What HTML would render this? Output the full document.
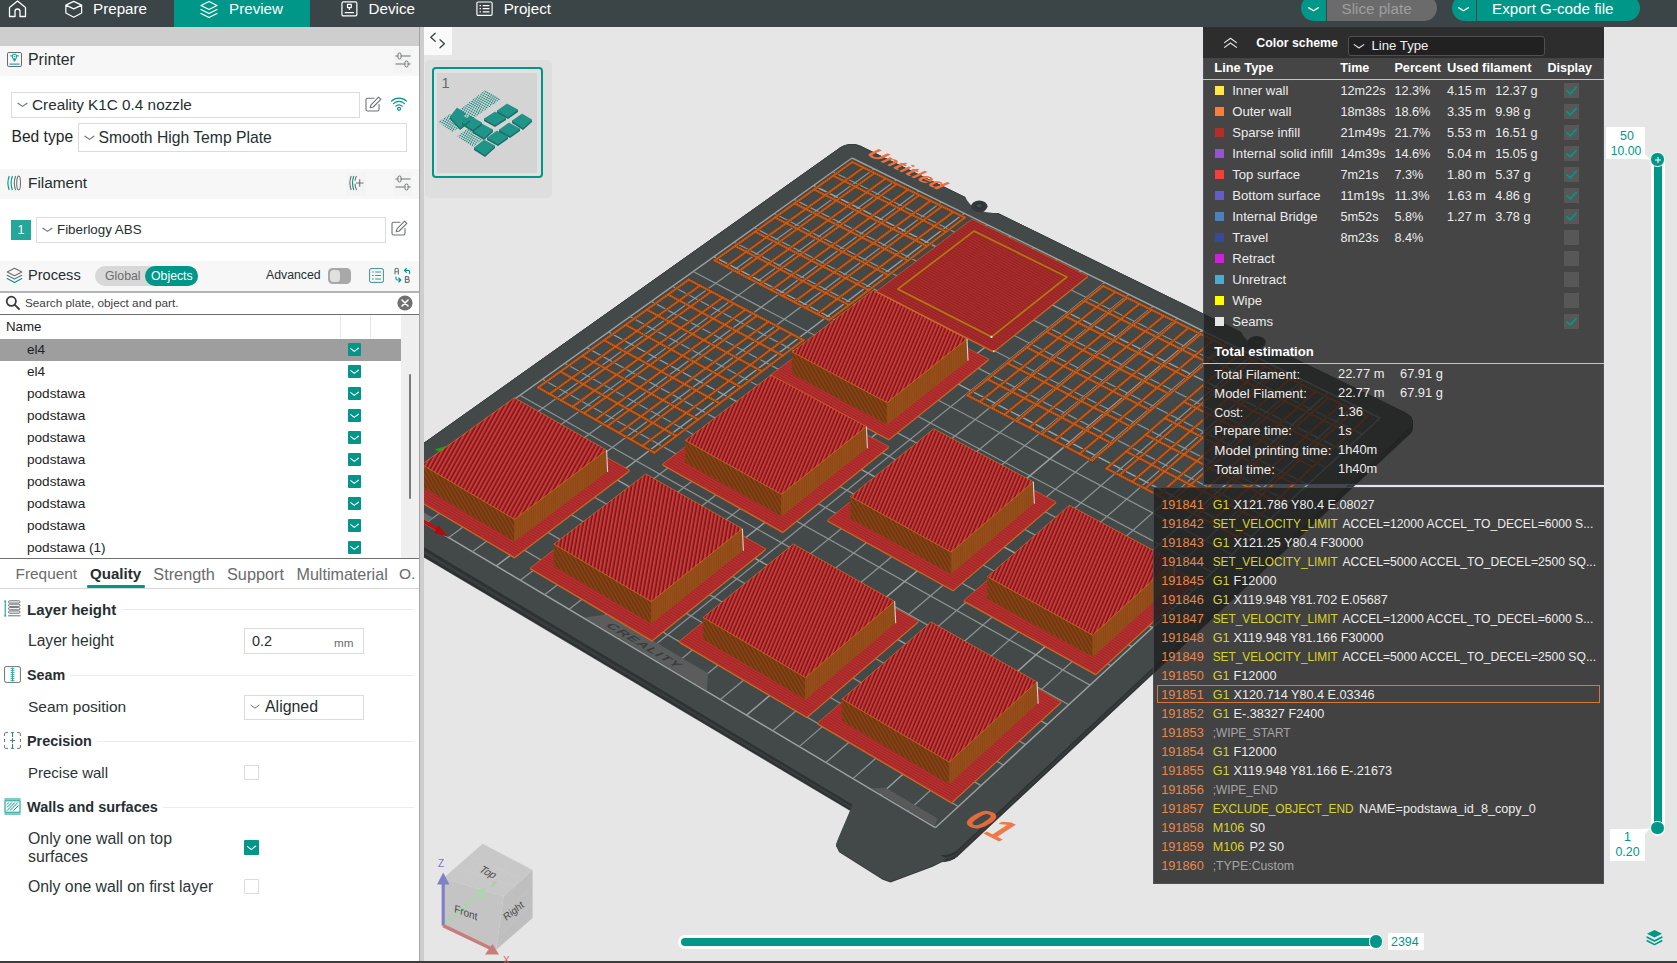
<!DOCTYPE html>
<html lang="en"><head><meta charset="utf-8"><title>OrcaSlicer Preview</title>
<style>
*{box-sizing:border-box}
html,body{margin:0;padding:0}
body{width:1677px;height:963px;overflow:hidden;position:relative;background:#e6e6e6;font-family:"Liberation Sans",sans-serif;color:#262e30}
.abs{position:absolute}
.t{position:absolute;white-space:nowrap;line-height:1}
#topbar{position:absolute;left:0;top:0;width:1677px;height:27px;background:#3b4446}
#topbar .t{color:#fff;font-size:15.2px}
#left{position:absolute;left:0;top:27px;width:419px;height:935px;background:#fff}
.hdr{position:absolute;left:0;width:419px;background:#f7f7f7}
.box{position:absolute;border:1px solid #dbdbdb;background:#fff}
.cb{position:absolute;width:13px;height:13px;background:#009688;border-radius:1px}
.cb svg{position:absolute;left:0;top:0}
.row{position:absolute;left:0;width:401px;height:22px}
.row .t{left:27px;top:4px;font-size:13.6px;color:#1d2224}
.ucb{position:absolute;width:15px;height:15px;border:1px solid #dbdbdb;background:#fff;border-radius:1px}
.sec{position:absolute;left:27px;font-weight:bold;font-size:14.6px;color:#262e30;white-space:nowrap;line-height:1}
.secline{position:absolute;height:1px;background:#ececec;right:5px}
.lab{position:absolute;left:28px;font-size:14.7px;color:#2c3436;line-height:1;white-space:nowrap}
</style></head><body>

<svg width="1253" height="936" viewBox="0 0 1253 936" style="position:absolute;left:424px;top:27px">
<defs>
<pattern id="pt" width="3.50" height="8" patternUnits="userSpaceOnUse" patternTransform="rotate(23)"><rect width="3.50" height="8" fill="#d13939"/><rect x="1.93" width="1.57" height="8" fill="#731919"/><rect x="1.63" width=".3" height="8" fill="#a52929"/></pattern>
<pattern id="pt3" width="3.75" height="8" patternUnits="userSpaceOnUse" patternTransform="rotate(10)"><rect width="3.75" height="8" fill="#d13939"/><rect x="2.06" width="1.69" height="8" fill="#731919"/><rect x="1.76" width=".3" height="8" fill="#a52929"/></pattern>
<pattern id="pt2" width="3.80" height="8" patternUnits="userSpaceOnUse" patternTransform="rotate(29)"><rect width="3.80" height="8" fill="#d13939"/><rect x="2.09" width="1.71" height="8" fill="#731919"/><rect x="1.79" width=".3" height="8" fill="#a52929"/></pattern>
<pattern id="pb" width="2.4" height="2.4" patternUnits="userSpaceOnUse" patternTransform="rotate(30)"><rect width="2.4" height="2.4" fill="#bb3030"/><rect y="1.5" width="2.4" height="0.9" fill="#9a2626"/><rect x="1.6" width="0.8" height="2.4" fill="#a82a2a" opacity=".55"/></pattern>
<pattern id="pbf" width="2.4" height="2.4" patternUnits="userSpaceOnUse" patternTransform="rotate(30)"><rect width="2.4" height="2.4" fill="#b22d2d"/><rect y="1.4" width="2.4" height="1" fill="#8c2222"/><rect x="1.5" width="0.9" height="2.4" fill="#9a2626" opacity=".6"/></pattern>
<pattern id="pl" width="3.4" height="8" patternUnits="userSpaceOnUse" patternTransform="rotate(-30)"><rect width="3.4" height="8" fill="#854315"/><rect x="2.1" width="1.3" height="8" fill="#6b340f"/></pattern>
<pattern id="pr" width="2.2" height="8" patternUnits="userSpaceOnUse"><rect width="2.2" height="8" fill="#964e19"/><rect x="1.5" width="0.7" height="8" fill="#8c4817"/></pattern>
</defs>
<polygon points="985.7,400.6 987.6,398.3 987.6,404.8 985.7,407.1" fill="#2b2f30" stroke="#2b2f30" stroke-width="0.6" stroke-linejoin="round" />
<polygon points="987.6,398.3 988.4,395.7 988.4,402.2 987.6,404.8" fill="#2b2f30" stroke="#2b2f30" stroke-width="0.6" stroke-linejoin="round" />
<polygon points="988.4,395.7 988.1,393.0 988.1,399.6 988.4,402.2" fill="#2b2f30" stroke="#2b2f30" stroke-width="0.6" stroke-linejoin="round" />
<polygon points="988.1,393.0 986.8,390.3 986.8,397.1 988.1,399.6" fill="#2b2f30" stroke="#2b2f30" stroke-width="0.6" stroke-linejoin="round" />
<polygon points="986.8,390.3 984.5,388.0 984.5,394.8 986.8,397.1" fill="#2b2f30" stroke="#2b2f30" stroke-width="0.6" stroke-linejoin="round" />
<polygon points="984.5,388.0 981.4,386.0 981.4,393.0 984.5,394.8" fill="#2b2f30" stroke="#2b2f30" stroke-width="0.6" stroke-linejoin="round" />
<polygon points="981.4,386.0 436.9,119.4 436.9,129.9 981.4,393.0" fill="#2b2f30" stroke="#2b2f30" stroke-width="0.6" stroke-linejoin="round" />
<polygon points="436.9,119.4 433.7,118.2 433.7,128.7 436.9,129.9" fill="#2b2f30" stroke="#2b2f30" stroke-width="0.6" stroke-linejoin="round" />
<polygon points="433.7,118.2 430.1,117.6 430.1,128.1 433.7,128.7" fill="#2b2f30" stroke="#2b2f30" stroke-width="0.6" stroke-linejoin="round" />
<polygon points="430.1,117.6 426.3,117.5 426.3,128.0 430.1,128.1" fill="#2b2f30" stroke="#2b2f30" stroke-width="0.6" stroke-linejoin="round" />
<polygon points="426.3,117.5 422.6,118.1 422.6,128.6 426.3,128.0" fill="#2b2f30" stroke="#2b2f30" stroke-width="0.6" stroke-linejoin="round" />
<polygon points="422.6,118.1 419.2,119.2 419.2,129.7 422.6,128.6" fill="#2b2f30" stroke="#2b2f30" stroke-width="0.6" stroke-linejoin="round" />
<polygon points="419.2,119.2 416.4,120.7 416.4,131.2 419.2,129.7" fill="#2b2f30" stroke="#2b2f30" stroke-width="0.6" stroke-linejoin="round" />
<polygon points="416.4,120.7 -67.1,463.8 -67.1,474.3 416.4,131.2" fill="#2b2f30" stroke="#2b2f30" stroke-width="0.6" stroke-linejoin="round" />
<polygon points="-67.1,463.8 -69.9,466.2 -69.9,476.7 -67.1,474.3" fill="#2b2f30" stroke="#2b2f30" stroke-width="0.6" stroke-linejoin="round" />
<polygon points="-69.9,466.2 -71.7,469.0 -71.7,479.5 -69.9,476.7" fill="#2b2f30" stroke="#2b2f30" stroke-width="0.6" stroke-linejoin="round" />
<polygon points="-71.7,469.0 -72.4,471.9 -72.4,482.4 -71.7,479.5" fill="#2b2f30" stroke="#2b2f30" stroke-width="0.6" stroke-linejoin="round" />
<polygon points="-72.4,471.9 -72.0,474.7 -72.0,485.2 -72.4,482.4" fill="#2b2f30" stroke="#2b2f30" stroke-width="0.6" stroke-linejoin="round" />
<polygon points="-72.0,474.7 -70.5,477.3 -70.5,487.8 -72.0,485.2" fill="#2b2f30" stroke="#2b2f30" stroke-width="0.6" stroke-linejoin="round" />
<polygon points="-70.5,477.3 -67.9,479.3 -67.9,489.8 -70.5,487.8" fill="#2b2f30" stroke="#2b2f30" stroke-width="0.6" stroke-linejoin="round" />
<polygon points="-67.9,479.3 507.9,825.2 507.9,832.1 -67.9,489.8" fill="#2b2f30" stroke="#2b2f30" stroke-width="0.6" stroke-linejoin="round" />
<polygon points="507.9,825.2 511.9,827.0 511.9,833.8 507.9,832.1" fill="#2b2f30" stroke="#2b2f30" stroke-width="0.6" stroke-linejoin="round" />
<polygon points="511.9,827.0 516.4,827.9 516.4,834.6 511.9,833.8" fill="#2b2f30" stroke="#2b2f30" stroke-width="0.6" stroke-linejoin="round" />
<polygon points="516.4,827.9 521.2,827.9 521.2,834.6 516.4,834.6" fill="#2b2f30" stroke="#2b2f30" stroke-width="0.6" stroke-linejoin="round" />
<polygon points="521.2,827.9 525.8,827.0 525.8,833.6 521.2,834.6" fill="#2b2f30" stroke="#2b2f30" stroke-width="0.6" stroke-linejoin="round" />
<polygon points="525.8,827.0 530.0,825.3 530.0,831.8 525.8,833.6" fill="#2b2f30" stroke="#2b2f30" stroke-width="0.6" stroke-linejoin="round" />
<polygon points="530.0,825.3 533.5,822.8 533.5,829.3 530.0,831.8" fill="#2b2f30" stroke="#2b2f30" stroke-width="0.6" stroke-linejoin="round" />
<polygon points="533.5,822.8 985.7,400.6 985.7,407.1 533.5,829.3" fill="#2b2f30" stroke="#2b2f30" stroke-width="0.6" stroke-linejoin="round" />
<polygon points="985.7,400.6 987.6,398.3 987.6,402.7 985.7,405.1" fill="#393d3e" stroke="#393d3e" stroke-width="0.6" stroke-linejoin="round" />
<polygon points="987.6,398.3 988.4,395.7 988.4,400.1 987.6,402.7" fill="#393d3e" stroke="#393d3e" stroke-width="0.6" stroke-linejoin="round" />
<polygon points="988.4,395.7 988.1,393.0 988.1,397.5 988.4,400.1" fill="#393d3e" stroke="#393d3e" stroke-width="0.6" stroke-linejoin="round" />
<polygon points="988.1,393.0 986.8,390.3 986.8,394.9 988.1,397.5" fill="#393d3e" stroke="#393d3e" stroke-width="0.6" stroke-linejoin="round" />
<polygon points="986.8,390.3 984.5,388.0 984.5,392.6 986.8,394.9" fill="#393d3e" stroke="#393d3e" stroke-width="0.6" stroke-linejoin="round" />
<polygon points="984.5,388.0 981.4,386.0 981.4,390.8 984.5,392.6" fill="#393d3e" stroke="#393d3e" stroke-width="0.6" stroke-linejoin="round" />
<polygon points="981.4,386.0 436.9,119.4 436.9,126.5 981.4,390.8" fill="#393d3e" stroke="#393d3e" stroke-width="0.6" stroke-linejoin="round" />
<polygon points="436.9,119.4 433.7,118.2 433.7,125.3 436.9,126.5" fill="#393d3e" stroke="#393d3e" stroke-width="0.6" stroke-linejoin="round" />
<polygon points="433.7,118.2 430.1,117.6 430.1,124.7 433.7,125.3" fill="#393d3e" stroke="#393d3e" stroke-width="0.6" stroke-linejoin="round" />
<polygon points="430.1,117.6 426.3,117.5 426.3,124.7 430.1,124.7" fill="#393d3e" stroke="#393d3e" stroke-width="0.6" stroke-linejoin="round" />
<polygon points="426.3,117.5 422.6,118.1 422.6,125.2 426.3,124.7" fill="#393d3e" stroke="#393d3e" stroke-width="0.6" stroke-linejoin="round" />
<polygon points="422.6,118.1 419.2,119.2 419.2,126.3 422.6,125.2" fill="#393d3e" stroke="#393d3e" stroke-width="0.6" stroke-linejoin="round" />
<polygon points="419.2,119.2 416.4,120.7 416.4,127.9 419.2,126.3" fill="#393d3e" stroke="#393d3e" stroke-width="0.6" stroke-linejoin="round" />
<polygon points="416.4,120.7 -67.1,463.8 -67.1,470.9 416.4,127.9" fill="#393d3e" stroke="#393d3e" stroke-width="0.6" stroke-linejoin="round" />
<polygon points="-67.1,463.8 -69.9,466.2 -69.9,473.4 -67.1,470.9" fill="#393d3e" stroke="#393d3e" stroke-width="0.6" stroke-linejoin="round" />
<polygon points="-69.9,466.2 -71.7,469.0 -71.7,476.2 -69.9,473.4" fill="#393d3e" stroke="#393d3e" stroke-width="0.6" stroke-linejoin="round" />
<polygon points="-71.7,469.0 -72.4,471.9 -72.4,479.1 -71.7,476.2" fill="#393d3e" stroke="#393d3e" stroke-width="0.6" stroke-linejoin="round" />
<polygon points="-72.4,471.9 -72.0,474.7 -72.0,481.9 -72.4,479.1" fill="#393d3e" stroke="#393d3e" stroke-width="0.6" stroke-linejoin="round" />
<polygon points="-72.0,474.7 -70.5,477.3 -70.5,484.4 -72.0,481.9" fill="#393d3e" stroke="#393d3e" stroke-width="0.6" stroke-linejoin="round" />
<polygon points="-70.5,477.3 -67.9,479.3 -67.9,486.5 -70.5,484.4" fill="#393d3e" stroke="#393d3e" stroke-width="0.6" stroke-linejoin="round" />
<polygon points="-67.9,479.3 507.9,825.2 507.9,829.9 -67.9,486.5" fill="#393d3e" stroke="#393d3e" stroke-width="0.6" stroke-linejoin="round" />
<polygon points="507.9,825.2 511.9,827.0 511.9,831.6 507.9,829.9" fill="#393d3e" stroke="#393d3e" stroke-width="0.6" stroke-linejoin="round" />
<polygon points="511.9,827.0 516.4,827.9 516.4,832.5 511.9,831.6" fill="#393d3e" stroke="#393d3e" stroke-width="0.6" stroke-linejoin="round" />
<polygon points="516.4,827.9 521.2,827.9 521.2,832.5 516.4,832.5" fill="#393d3e" stroke="#393d3e" stroke-width="0.6" stroke-linejoin="round" />
<polygon points="521.2,827.9 525.8,827.0 525.8,831.5 521.2,832.5" fill="#393d3e" stroke="#393d3e" stroke-width="0.6" stroke-linejoin="round" />
<polygon points="525.8,827.0 530.0,825.3 530.0,829.7 525.8,831.5" fill="#393d3e" stroke="#393d3e" stroke-width="0.6" stroke-linejoin="round" />
<polygon points="530.0,825.3 533.5,822.8 533.5,827.2 530.0,829.7" fill="#393d3e" stroke="#393d3e" stroke-width="0.6" stroke-linejoin="round" />
<polygon points="533.5,822.8 985.7,400.6 985.7,405.1 533.5,827.2" fill="#393d3e" stroke="#393d3e" stroke-width="0.6" stroke-linejoin="round" />
<polygon points="985.7,400.6 987.6,398.3 987.6,400.3 985.7,402.6" fill="#2e3233" stroke="#2e3233" stroke-width="0.6" stroke-linejoin="round" />
<polygon points="987.6,398.3 988.4,395.7 988.4,397.7 987.6,400.3" fill="#2e3233" stroke="#2e3233" stroke-width="0.6" stroke-linejoin="round" />
<polygon points="988.4,395.7 988.1,393.0 988.1,395.0 988.4,397.7" fill="#2e3233" stroke="#2e3233" stroke-width="0.6" stroke-linejoin="round" />
<polygon points="988.1,393.0 986.8,390.3 986.8,392.4 988.1,395.0" fill="#2e3233" stroke="#2e3233" stroke-width="0.6" stroke-linejoin="round" />
<polygon points="986.8,390.3 984.5,388.0 984.5,390.0 986.8,392.4" fill="#2e3233" stroke="#2e3233" stroke-width="0.6" stroke-linejoin="round" />
<polygon points="984.5,388.0 981.4,386.0 981.4,388.1 984.5,390.0" fill="#2e3233" stroke="#2e3233" stroke-width="0.6" stroke-linejoin="round" />
<polygon points="981.4,386.0 436.9,119.4 436.9,122.5 981.4,388.1" fill="#2e3233" stroke="#2e3233" stroke-width="0.6" stroke-linejoin="round" />
<polygon points="436.9,119.4 433.7,118.2 433.7,121.4 436.9,122.5" fill="#2e3233" stroke="#2e3233" stroke-width="0.6" stroke-linejoin="round" />
<polygon points="433.7,118.2 430.1,117.6 430.1,120.7 433.7,121.4" fill="#2e3233" stroke="#2e3233" stroke-width="0.6" stroke-linejoin="round" />
<polygon points="430.1,117.6 426.3,117.5 426.3,120.7 430.1,120.7" fill="#2e3233" stroke="#2e3233" stroke-width="0.6" stroke-linejoin="round" />
<polygon points="426.3,117.5 422.6,118.1 422.6,121.2 426.3,120.7" fill="#2e3233" stroke="#2e3233" stroke-width="0.6" stroke-linejoin="round" />
<polygon points="422.6,118.1 419.2,119.2 419.2,122.3 422.6,121.2" fill="#2e3233" stroke="#2e3233" stroke-width="0.6" stroke-linejoin="round" />
<polygon points="419.2,119.2 416.4,120.7 416.4,123.9 419.2,122.3" fill="#2e3233" stroke="#2e3233" stroke-width="0.6" stroke-linejoin="round" />
<polygon points="416.4,120.7 -67.1,463.8 -67.1,466.9 416.4,123.9" fill="#2e3233" stroke="#2e3233" stroke-width="0.6" stroke-linejoin="round" />
<polygon points="-67.1,463.8 -69.9,466.2 -69.9,469.4 -67.1,466.9" fill="#2e3233" stroke="#2e3233" stroke-width="0.6" stroke-linejoin="round" />
<polygon points="-69.9,466.2 -71.7,469.0 -71.7,472.2 -69.9,469.4" fill="#2e3233" stroke="#2e3233" stroke-width="0.6" stroke-linejoin="round" />
<polygon points="-71.7,469.0 -72.4,471.9 -72.4,475.1 -71.7,472.2" fill="#2e3233" stroke="#2e3233" stroke-width="0.6" stroke-linejoin="round" />
<polygon points="-72.4,471.9 -72.0,474.7 -72.0,477.9 -72.4,475.1" fill="#2e3233" stroke="#2e3233" stroke-width="0.6" stroke-linejoin="round" />
<polygon points="-72.0,474.7 -70.5,477.3 -70.5,480.4 -72.0,477.9" fill="#2e3233" stroke="#2e3233" stroke-width="0.6" stroke-linejoin="round" />
<polygon points="-70.5,477.3 -67.9,479.3 -67.9,482.5 -70.5,480.4" fill="#2e3233" stroke="#2e3233" stroke-width="0.6" stroke-linejoin="round" />
<polygon points="-67.9,479.3 507.9,825.2 507.9,827.2 -67.9,482.5" fill="#2e3233" stroke="#2e3233" stroke-width="0.6" stroke-linejoin="round" />
<polygon points="507.9,825.2 511.9,827.0 511.9,829.0 507.9,827.2" fill="#2e3233" stroke="#2e3233" stroke-width="0.6" stroke-linejoin="round" />
<polygon points="511.9,827.0 516.4,827.9 516.4,829.9 511.9,829.0" fill="#2e3233" stroke="#2e3233" stroke-width="0.6" stroke-linejoin="round" />
<polygon points="516.4,827.9 521.2,827.9 521.2,829.9 516.4,829.9" fill="#2e3233" stroke="#2e3233" stroke-width="0.6" stroke-linejoin="round" />
<polygon points="521.2,827.9 525.8,827.0 525.8,829.0 521.2,829.9" fill="#2e3233" stroke="#2e3233" stroke-width="0.6" stroke-linejoin="round" />
<polygon points="525.8,827.0 530.0,825.3 530.0,827.2 525.8,829.0" fill="#2e3233" stroke="#2e3233" stroke-width="0.6" stroke-linejoin="round" />
<polygon points="530.0,825.3 533.5,822.8 533.5,824.7 530.0,827.2" fill="#2e3233" stroke="#2e3233" stroke-width="0.6" stroke-linejoin="round" />
<polygon points="533.5,822.8 985.7,400.6 985.7,402.6 533.5,824.7" fill="#2e3233" stroke="#2e3233" stroke-width="0.6" stroke-linejoin="round" />
<polygon points="429.6,777.9 414.5,813.3 412.3,819.4 415.2,825.2 458.7,852.8 466.6,855.4 508.7,839.7 521.7,833.2" fill="#35393a" />
<polygon points="429.6,776.4 414.5,811.8 412.3,817.9 415.2,823.7 458.7,851.3 466.6,853.9 508.7,838.2 521.7,831.7" fill="#434849" stroke="#434849" stroke-width="1" stroke-linejoin="round" />
<polygon points="985.7,400.6 987.6,398.3 988.4,395.7 988.1,393.0 986.8,390.3 984.5,388.0 981.4,386.0 436.9,119.4 433.7,118.2 430.1,117.6 426.3,117.5 422.6,118.1 419.2,119.2 416.4,120.7 -67.1,463.8 -69.9,466.2 -71.7,469.0 -72.4,471.9 -72.0,474.7 -70.5,477.3 -67.9,479.3 507.9,825.2 511.9,827.0 516.4,827.9 521.2,827.9 525.8,827.0 530.0,825.3 533.5,822.8" fill="#434849" />
<polygon points="540.9,168.9 542.8,173.1 546.3,177.6 561.1,184.9 569.1,186.0 576.7,186.0 581.5,180.9 547.2,164.2" fill="#e6e6e6" />
<polygon points="816.7,303.9 819.1,308.5 823.2,313.4 839.5,321.4 847.9,322.6 855.8,322.6 860.2,317.0 822.8,298.7" fill="#e6e6e6" />
<ellipse cx="832.7" cy="315.2" rx="9" ry="6.3" fill="#34383a"/>
<ellipse cx="832.7" cy="314.7" rx="4" ry="2.7" fill="#43494a" stroke="#2a2d2e" stroke-width="1"/>
<ellipse cx="555.3" cy="179.3" rx="8.2" ry="5.8" fill="#34383a"/>
<ellipse cx="555.3" cy="178.8" rx="3.6" ry="2.4" fill="#43494a" stroke="#2a2d2e" stroke-width="1"/>
<line x1="-45.0" y1="469.0" x2="428.0" y2="131.0" stroke="#9aa0a0" stroke-width="1.45" />
<line x1="-45.0" y1="469.0" x2="511.3" y2="800.7" stroke="#9aa0a0" stroke-width="1.45" />
<line x1="-21.9" y1="482.7" x2="450.1" y2="141.9" stroke="#8c9293" stroke-width="1.25" />
<line x1="-20.8" y1="451.7" x2="534.3" y2="779.5" stroke="#8c9293" stroke-width="1.25" />
<line x1="1.3" y1="496.6" x2="472.4" y2="152.9" stroke="#8c9293" stroke-width="1.25" />
<line x1="3.1" y1="434.7" x2="557.0" y2="758.6" stroke="#8c9293" stroke-width="1.25" />
<line x1="24.8" y1="510.6" x2="494.9" y2="163.9" stroke="#8c9293" stroke-width="1.25" />
<line x1="26.7" y1="417.8" x2="579.3" y2="738.0" stroke="#8c9293" stroke-width="1.25" />
<line x1="48.4" y1="524.7" x2="517.5" y2="175.1" stroke="#8c9293" stroke-width="1.25" />
<line x1="50.0" y1="401.1" x2="601.5" y2="717.6" stroke="#8c9293" stroke-width="1.25" />
<line x1="72.3" y1="538.9" x2="540.3" y2="186.3" stroke="#9aa0a0" stroke-width="1.4" />
<line x1="73.1" y1="384.6" x2="623.3" y2="697.5" stroke="#9aa0a0" stroke-width="1.4" />
<line x1="96.3" y1="553.3" x2="563.3" y2="197.6" stroke="#8c9293" stroke-width="1.25" />
<line x1="95.9" y1="368.3" x2="644.8" y2="677.7" stroke="#8c9293" stroke-width="1.25" />
<line x1="120.6" y1="567.7" x2="586.4" y2="209.0" stroke="#8c9293" stroke-width="1.25" />
<line x1="118.4" y1="352.2" x2="666.1" y2="658.1" stroke="#8c9293" stroke-width="1.25" />
<line x1="145.1" y1="582.3" x2="609.8" y2="220.5" stroke="#8c9293" stroke-width="1.25" />
<line x1="140.7" y1="336.3" x2="687.1" y2="638.7" stroke="#8c9293" stroke-width="1.25" />
<line x1="169.7" y1="597.0" x2="633.3" y2="232.1" stroke="#8c9293" stroke-width="1.25" />
<line x1="162.7" y1="320.6" x2="707.9" y2="619.6" stroke="#8c9293" stroke-width="1.25" />
<line x1="194.6" y1="611.9" x2="657.0" y2="243.7" stroke="#9aa0a0" stroke-width="1.4" />
<line x1="184.5" y1="305.0" x2="728.4" y2="600.7" stroke="#9aa0a0" stroke-width="1.4" />
<line x1="219.8" y1="626.9" x2="680.8" y2="255.5" stroke="#8c9293" stroke-width="1.25" />
<line x1="206.0" y1="289.6" x2="748.6" y2="582.1" stroke="#8c9293" stroke-width="1.25" />
<line x1="245.1" y1="642.0" x2="704.9" y2="267.3" stroke="#8c9293" stroke-width="1.25" />
<line x1="227.3" y1="274.4" x2="768.6" y2="563.6" stroke="#8c9293" stroke-width="1.25" />
<line x1="270.7" y1="657.2" x2="729.1" y2="279.3" stroke="#8c9293" stroke-width="1.25" />
<line x1="248.4" y1="259.3" x2="788.4" y2="545.4" stroke="#8c9293" stroke-width="1.25" />
<line x1="296.4" y1="672.6" x2="753.5" y2="291.3" stroke="#8c9293" stroke-width="1.25" />
<line x1="269.2" y1="244.5" x2="807.9" y2="527.5" stroke="#8c9293" stroke-width="1.25" />
<line x1="322.5" y1="688.1" x2="778.1" y2="303.4" stroke="#9aa0a0" stroke-width="1.4" />
<line x1="289.8" y1="229.7" x2="827.2" y2="509.7" stroke="#9aa0a0" stroke-width="1.4" />
<line x1="348.7" y1="703.8" x2="803.0" y2="315.6" stroke="#8c9293" stroke-width="1.25" />
<line x1="310.2" y1="215.2" x2="846.2" y2="492.1" stroke="#8c9293" stroke-width="1.25" />
<line x1="375.2" y1="719.6" x2="828.0" y2="328.0" stroke="#8c9293" stroke-width="1.25" />
<line x1="330.4" y1="200.8" x2="865.1" y2="474.8" stroke="#8c9293" stroke-width="1.25" />
<line x1="401.9" y1="735.5" x2="853.2" y2="340.4" stroke="#8c9293" stroke-width="1.25" />
<line x1="350.3" y1="186.5" x2="883.7" y2="457.6" stroke="#8c9293" stroke-width="1.25" />
<line x1="428.9" y1="751.6" x2="878.6" y2="352.9" stroke="#8c9293" stroke-width="1.25" />
<line x1="370.1" y1="172.4" x2="902.1" y2="440.7" stroke="#8c9293" stroke-width="1.25" />
<line x1="456.1" y1="767.8" x2="904.2" y2="365.5" stroke="#9aa0a0" stroke-width="1.4" />
<line x1="389.6" y1="158.5" x2="920.3" y2="423.9" stroke="#9aa0a0" stroke-width="1.4" />
<line x1="483.6" y1="784.2" x2="930.0" y2="378.2" stroke="#8c9293" stroke-width="1.25" />
<line x1="408.9" y1="144.7" x2="938.2" y2="407.4" stroke="#8c9293" stroke-width="1.25" />
<line x1="511.3" y1="800.7" x2="956.0" y2="391.0" stroke="#9aa0a0" stroke-width="1.45" />
<line x1="428.0" y1="131.0" x2="956.0" y2="391.0" stroke="#9aa0a0" stroke-width="1.45" />
<polygon points="160.6,590.6 184.3,587.3 283.9,646.3 282.9,663.5" fill="#5b5d5d" />
<text x="0" y="0" transform="translate(180.8,598.6) rotate(30.8) skewX(-38) scale(1,0.62)" font-family="Liberation Sans, sans-serif" font-size="15" font-weight="bold" letter-spacing="1.1" fill="#3a3d3e">CREALITY</text>
<polygon points="447.5,761.3 461.7,760.7 513.5,791.5 510.8,799.0" fill="#585a5a" />
<polygon points="-14.2,477.2 9.1,491.0 2.8,495.6 -20.5,481.7" fill="#6a6c6c" />
<line x1="-26.6" y1="478.7" x2="13.0" y2="502.3" stroke="#cc0808" stroke-width="3.3" />
<polygon points="24.8,510.0 10.0,505.8 14.4,498.4" fill="#b00c0c" />
<polygon points="26.7,417.8 10.6,422.2 21.6,428.6" fill="#18a018" />
<line x1="290.8" y1="233.5" x2="428.3" y2="135.1" stroke="#73320e" stroke-width="3.3" stroke-linecap="square"/>
<line x1="302.0" y1="239.4" x2="439.4" y2="140.5" stroke="#73320e" stroke-width="3.3" stroke-linecap="square"/>
<line x1="313.3" y1="245.3" x2="450.5" y2="146.0" stroke="#73320e" stroke-width="3.3" stroke-linecap="square"/>
<line x1="324.6" y1="251.2" x2="461.6" y2="151.5" stroke="#73320e" stroke-width="3.3" stroke-linecap="square"/>
<line x1="335.9" y1="257.1" x2="472.8" y2="157.0" stroke="#73320e" stroke-width="3.3" stroke-linecap="square"/>
<line x1="347.3" y1="263.0" x2="484.1" y2="162.6" stroke="#73320e" stroke-width="3.3" stroke-linecap="square"/>
<line x1="358.8" y1="269.0" x2="495.3" y2="168.1" stroke="#73320e" stroke-width="3.3" stroke-linecap="square"/>
<line x1="370.2" y1="275.0" x2="506.6" y2="173.7" stroke="#73320e" stroke-width="3.3" stroke-linecap="square"/>
<line x1="381.8" y1="281.0" x2="518.0" y2="179.3" stroke="#73320e" stroke-width="3.3" stroke-linecap="square"/>
<line x1="393.3" y1="287.0" x2="529.4" y2="184.9" stroke="#73320e" stroke-width="3.3" stroke-linecap="square"/>
<line x1="405.0" y1="293.1" x2="540.8" y2="190.6" stroke="#73320e" stroke-width="3.3" stroke-linecap="square"/>
<line x1="290.8" y1="233.5" x2="405.0" y2="293.1" stroke="#73320e" stroke-width="3.3" stroke-linecap="square"/>
<line x1="311.1" y1="219.0" x2="425.0" y2="278.0" stroke="#73320e" stroke-width="3.3" stroke-linecap="square"/>
<line x1="331.1" y1="204.7" x2="444.8" y2="263.0" stroke="#73320e" stroke-width="3.3" stroke-linecap="square"/>
<line x1="351.0" y1="190.4" x2="464.5" y2="248.2" stroke="#73320e" stroke-width="3.3" stroke-linecap="square"/>
<line x1="370.6" y1="176.4" x2="483.9" y2="233.6" stroke="#73320e" stroke-width="3.3" stroke-linecap="square"/>
<line x1="390.1" y1="162.5" x2="503.1" y2="219.1" stroke="#73320e" stroke-width="3.3" stroke-linecap="square"/>
<line x1="409.3" y1="148.7" x2="522.1" y2="204.7" stroke="#73320e" stroke-width="3.3" stroke-linecap="square"/>
<line x1="428.3" y1="135.1" x2="540.8" y2="190.6" stroke="#73320e" stroke-width="3.3" stroke-linecap="square"/>
<line x1="290.8" y1="233.5" x2="428.3" y2="135.1" stroke="#ad511a" stroke-width="2.3" stroke-linecap="square"/>
<line x1="302.0" y1="239.4" x2="439.4" y2="140.5" stroke="#ad511a" stroke-width="2.3" stroke-linecap="square"/>
<line x1="313.3" y1="245.3" x2="450.5" y2="146.0" stroke="#ad511a" stroke-width="2.3" stroke-linecap="square"/>
<line x1="324.6" y1="251.2" x2="461.6" y2="151.5" stroke="#ad511a" stroke-width="2.3" stroke-linecap="square"/>
<line x1="335.9" y1="257.1" x2="472.8" y2="157.0" stroke="#ad511a" stroke-width="2.3" stroke-linecap="square"/>
<line x1="347.3" y1="263.0" x2="484.1" y2="162.6" stroke="#ad511a" stroke-width="2.3" stroke-linecap="square"/>
<line x1="358.8" y1="269.0" x2="495.3" y2="168.1" stroke="#ad511a" stroke-width="2.3" stroke-linecap="square"/>
<line x1="370.2" y1="275.0" x2="506.6" y2="173.7" stroke="#ad511a" stroke-width="2.3" stroke-linecap="square"/>
<line x1="381.8" y1="281.0" x2="518.0" y2="179.3" stroke="#ad511a" stroke-width="2.3" stroke-linecap="square"/>
<line x1="393.3" y1="287.0" x2="529.4" y2="184.9" stroke="#ad511a" stroke-width="2.3" stroke-linecap="square"/>
<line x1="405.0" y1="293.1" x2="540.8" y2="190.6" stroke="#ad511a" stroke-width="2.3" stroke-linecap="square"/>
<line x1="290.8" y1="233.5" x2="405.0" y2="293.1" stroke="#ad511a" stroke-width="2.3" stroke-linecap="square"/>
<line x1="311.1" y1="219.0" x2="425.0" y2="278.0" stroke="#ad511a" stroke-width="2.3" stroke-linecap="square"/>
<line x1="331.1" y1="204.7" x2="444.8" y2="263.0" stroke="#ad511a" stroke-width="2.3" stroke-linecap="square"/>
<line x1="351.0" y1="190.4" x2="464.5" y2="248.2" stroke="#ad511a" stroke-width="2.3" stroke-linecap="square"/>
<line x1="370.6" y1="176.4" x2="483.9" y2="233.6" stroke="#ad511a" stroke-width="2.3" stroke-linecap="square"/>
<line x1="390.1" y1="162.5" x2="503.1" y2="219.1" stroke="#ad511a" stroke-width="2.3" stroke-linecap="square"/>
<line x1="409.3" y1="148.7" x2="522.1" y2="204.7" stroke="#ad511a" stroke-width="2.3" stroke-linecap="square"/>
<line x1="428.3" y1="135.1" x2="540.8" y2="190.6" stroke="#ad511a" stroke-width="2.3" stroke-linecap="square"/>
<line x1="290.8" y1="233.5" x2="428.3" y2="135.1" stroke="#cf6a26" stroke-width="1.3" stroke-dasharray="1.0 1.3" stroke-linecap="butt"/>
<line x1="302.0" y1="239.4" x2="439.4" y2="140.5" stroke="#cf6a26" stroke-width="1.3" stroke-dasharray="1.0 1.3" stroke-linecap="butt"/>
<line x1="313.3" y1="245.3" x2="450.5" y2="146.0" stroke="#cf6a26" stroke-width="1.3" stroke-dasharray="1.0 1.3" stroke-linecap="butt"/>
<line x1="324.6" y1="251.2" x2="461.6" y2="151.5" stroke="#cf6a26" stroke-width="1.3" stroke-dasharray="1.0 1.3" stroke-linecap="butt"/>
<line x1="335.9" y1="257.1" x2="472.8" y2="157.0" stroke="#cf6a26" stroke-width="1.3" stroke-dasharray="1.0 1.3" stroke-linecap="butt"/>
<line x1="347.3" y1="263.0" x2="484.1" y2="162.6" stroke="#cf6a26" stroke-width="1.3" stroke-dasharray="1.0 1.3" stroke-linecap="butt"/>
<line x1="358.8" y1="269.0" x2="495.3" y2="168.1" stroke="#cf6a26" stroke-width="1.3" stroke-dasharray="1.0 1.3" stroke-linecap="butt"/>
<line x1="370.2" y1="275.0" x2="506.6" y2="173.7" stroke="#cf6a26" stroke-width="1.3" stroke-dasharray="1.0 1.3" stroke-linecap="butt"/>
<line x1="381.8" y1="281.0" x2="518.0" y2="179.3" stroke="#cf6a26" stroke-width="1.3" stroke-dasharray="1.0 1.3" stroke-linecap="butt"/>
<line x1="393.3" y1="287.0" x2="529.4" y2="184.9" stroke="#cf6a26" stroke-width="1.3" stroke-dasharray="1.0 1.3" stroke-linecap="butt"/>
<line x1="405.0" y1="293.1" x2="540.8" y2="190.6" stroke="#cf6a26" stroke-width="1.3" stroke-dasharray="1.0 1.3" stroke-linecap="butt"/>
<line x1="290.8" y1="233.5" x2="405.0" y2="293.1" stroke="#cf6a26" stroke-width="1.3" stroke-dasharray="1.0 1.3" stroke-linecap="butt"/>
<line x1="311.1" y1="219.0" x2="425.0" y2="278.0" stroke="#cf6a26" stroke-width="1.3" stroke-dasharray="1.0 1.3" stroke-linecap="butt"/>
<line x1="331.1" y1="204.7" x2="444.8" y2="263.0" stroke="#cf6a26" stroke-width="1.3" stroke-dasharray="1.0 1.3" stroke-linecap="butt"/>
<line x1="351.0" y1="190.4" x2="464.5" y2="248.2" stroke="#cf6a26" stroke-width="1.3" stroke-dasharray="1.0 1.3" stroke-linecap="butt"/>
<line x1="370.6" y1="176.4" x2="483.9" y2="233.6" stroke="#cf6a26" stroke-width="1.3" stroke-dasharray="1.0 1.3" stroke-linecap="butt"/>
<line x1="390.1" y1="162.5" x2="503.1" y2="219.1" stroke="#cf6a26" stroke-width="1.3" stroke-dasharray="1.0 1.3" stroke-linecap="butt"/>
<line x1="409.3" y1="148.7" x2="522.1" y2="204.7" stroke="#cf6a26" stroke-width="1.3" stroke-dasharray="1.0 1.3" stroke-linecap="butt"/>
<line x1="428.3" y1="135.1" x2="540.8" y2="190.6" stroke="#cf6a26" stroke-width="1.3" stroke-dasharray="1.0 1.3" stroke-linecap="butt"/>
<polygon points="452.4,265.5 569.8,325.7 664.0,250.3 548.0,193.2" fill="#c96a22" />
<polygon points="452.4,264.3 569.8,324.5 664.0,249.1 548.0,192.0" fill="url(#pbf)" stroke="#cf6f20" stroke-width="0.6" stroke-linejoin="round" />
<polygon points="473.9,262.1 567.5,309.9 642.9,250.0 550.1,204.1" fill="none" stroke="#7a3610" stroke-width="3.2" stroke-linejoin="round" />
<polygon points="473.9,262.1 567.5,309.9 642.9,250.0 550.1,204.1" fill="none" stroke="#c46a20" stroke-width="1.9" stroke-linejoin="round" />
<circle cx="567.5" cy="309.9" r="1.1" fill="#eee"/>
<circle cx="569.8" cy="324.1" r="0.9" fill="#eee"/>
<line x1="114.2" y1="360.5" x2="264.8" y2="252.7" stroke="#73320e" stroke-width="3.3" stroke-linecap="square"/>
<line x1="125.6" y1="366.9" x2="276.0" y2="258.6" stroke="#73320e" stroke-width="3.3" stroke-linecap="square"/>
<line x1="137.0" y1="373.3" x2="287.3" y2="264.6" stroke="#73320e" stroke-width="3.3" stroke-linecap="square"/>
<line x1="148.5" y1="379.8" x2="298.7" y2="270.6" stroke="#73320e" stroke-width="3.3" stroke-linecap="square"/>
<line x1="160.1" y1="386.2" x2="310.0" y2="276.6" stroke="#73320e" stroke-width="3.3" stroke-linecap="square"/>
<line x1="171.6" y1="392.7" x2="321.5" y2="282.6" stroke="#73320e" stroke-width="3.3" stroke-linecap="square"/>
<line x1="183.3" y1="399.2" x2="332.9" y2="288.7" stroke="#73320e" stroke-width="3.3" stroke-linecap="square"/>
<line x1="194.9" y1="405.8" x2="344.5" y2="294.7" stroke="#73320e" stroke-width="3.3" stroke-linecap="square"/>
<line x1="206.7" y1="412.4" x2="356.0" y2="300.8" stroke="#73320e" stroke-width="3.3" stroke-linecap="square"/>
<line x1="218.4" y1="419.0" x2="367.6" y2="306.9" stroke="#73320e" stroke-width="3.3" stroke-linecap="square"/>
<line x1="230.3" y1="425.6" x2="379.3" y2="313.1" stroke="#73320e" stroke-width="3.3" stroke-linecap="square"/>
<line x1="114.2" y1="360.5" x2="230.3" y2="425.6" stroke="#73320e" stroke-width="3.3" stroke-linecap="square"/>
<line x1="136.4" y1="344.6" x2="252.3" y2="409.0" stroke="#73320e" stroke-width="3.3" stroke-linecap="square"/>
<line x1="158.4" y1="328.9" x2="274.1" y2="392.5" stroke="#73320e" stroke-width="3.3" stroke-linecap="square"/>
<line x1="180.2" y1="313.3" x2="295.6" y2="376.3" stroke="#73320e" stroke-width="3.3" stroke-linecap="square"/>
<line x1="201.7" y1="297.9" x2="316.9" y2="360.2" stroke="#73320e" stroke-width="3.3" stroke-linecap="square"/>
<line x1="222.9" y1="282.7" x2="337.9" y2="344.3" stroke="#73320e" stroke-width="3.3" stroke-linecap="square"/>
<line x1="244.0" y1="267.6" x2="358.7" y2="328.6" stroke="#73320e" stroke-width="3.3" stroke-linecap="square"/>
<line x1="264.8" y1="252.7" x2="379.3" y2="313.1" stroke="#73320e" stroke-width="3.3" stroke-linecap="square"/>
<line x1="114.2" y1="360.5" x2="264.8" y2="252.7" stroke="#ad511a" stroke-width="2.3" stroke-linecap="square"/>
<line x1="125.6" y1="366.9" x2="276.0" y2="258.6" stroke="#ad511a" stroke-width="2.3" stroke-linecap="square"/>
<line x1="137.0" y1="373.3" x2="287.3" y2="264.6" stroke="#ad511a" stroke-width="2.3" stroke-linecap="square"/>
<line x1="148.5" y1="379.8" x2="298.7" y2="270.6" stroke="#ad511a" stroke-width="2.3" stroke-linecap="square"/>
<line x1="160.1" y1="386.2" x2="310.0" y2="276.6" stroke="#ad511a" stroke-width="2.3" stroke-linecap="square"/>
<line x1="171.6" y1="392.7" x2="321.5" y2="282.6" stroke="#ad511a" stroke-width="2.3" stroke-linecap="square"/>
<line x1="183.3" y1="399.2" x2="332.9" y2="288.7" stroke="#ad511a" stroke-width="2.3" stroke-linecap="square"/>
<line x1="194.9" y1="405.8" x2="344.5" y2="294.7" stroke="#ad511a" stroke-width="2.3" stroke-linecap="square"/>
<line x1="206.7" y1="412.4" x2="356.0" y2="300.8" stroke="#ad511a" stroke-width="2.3" stroke-linecap="square"/>
<line x1="218.4" y1="419.0" x2="367.6" y2="306.9" stroke="#ad511a" stroke-width="2.3" stroke-linecap="square"/>
<line x1="230.3" y1="425.6" x2="379.3" y2="313.1" stroke="#ad511a" stroke-width="2.3" stroke-linecap="square"/>
<line x1="114.2" y1="360.5" x2="230.3" y2="425.6" stroke="#ad511a" stroke-width="2.3" stroke-linecap="square"/>
<line x1="136.4" y1="344.6" x2="252.3" y2="409.0" stroke="#ad511a" stroke-width="2.3" stroke-linecap="square"/>
<line x1="158.4" y1="328.9" x2="274.1" y2="392.5" stroke="#ad511a" stroke-width="2.3" stroke-linecap="square"/>
<line x1="180.2" y1="313.3" x2="295.6" y2="376.3" stroke="#ad511a" stroke-width="2.3" stroke-linecap="square"/>
<line x1="201.7" y1="297.9" x2="316.9" y2="360.2" stroke="#ad511a" stroke-width="2.3" stroke-linecap="square"/>
<line x1="222.9" y1="282.7" x2="337.9" y2="344.3" stroke="#ad511a" stroke-width="2.3" stroke-linecap="square"/>
<line x1="244.0" y1="267.6" x2="358.7" y2="328.6" stroke="#ad511a" stroke-width="2.3" stroke-linecap="square"/>
<line x1="264.8" y1="252.7" x2="379.3" y2="313.1" stroke="#ad511a" stroke-width="2.3" stroke-linecap="square"/>
<line x1="114.2" y1="360.5" x2="264.8" y2="252.7" stroke="#cf6a26" stroke-width="1.3" stroke-dasharray="1.0 1.3" stroke-linecap="butt"/>
<line x1="125.6" y1="366.9" x2="276.0" y2="258.6" stroke="#cf6a26" stroke-width="1.3" stroke-dasharray="1.0 1.3" stroke-linecap="butt"/>
<line x1="137.0" y1="373.3" x2="287.3" y2="264.6" stroke="#cf6a26" stroke-width="1.3" stroke-dasharray="1.0 1.3" stroke-linecap="butt"/>
<line x1="148.5" y1="379.8" x2="298.7" y2="270.6" stroke="#cf6a26" stroke-width="1.3" stroke-dasharray="1.0 1.3" stroke-linecap="butt"/>
<line x1="160.1" y1="386.2" x2="310.0" y2="276.6" stroke="#cf6a26" stroke-width="1.3" stroke-dasharray="1.0 1.3" stroke-linecap="butt"/>
<line x1="171.6" y1="392.7" x2="321.5" y2="282.6" stroke="#cf6a26" stroke-width="1.3" stroke-dasharray="1.0 1.3" stroke-linecap="butt"/>
<line x1="183.3" y1="399.2" x2="332.9" y2="288.7" stroke="#cf6a26" stroke-width="1.3" stroke-dasharray="1.0 1.3" stroke-linecap="butt"/>
<line x1="194.9" y1="405.8" x2="344.5" y2="294.7" stroke="#cf6a26" stroke-width="1.3" stroke-dasharray="1.0 1.3" stroke-linecap="butt"/>
<line x1="206.7" y1="412.4" x2="356.0" y2="300.8" stroke="#cf6a26" stroke-width="1.3" stroke-dasharray="1.0 1.3" stroke-linecap="butt"/>
<line x1="218.4" y1="419.0" x2="367.6" y2="306.9" stroke="#cf6a26" stroke-width="1.3" stroke-dasharray="1.0 1.3" stroke-linecap="butt"/>
<line x1="230.3" y1="425.6" x2="379.3" y2="313.1" stroke="#cf6a26" stroke-width="1.3" stroke-dasharray="1.0 1.3" stroke-linecap="butt"/>
<line x1="114.2" y1="360.5" x2="230.3" y2="425.6" stroke="#cf6a26" stroke-width="1.3" stroke-dasharray="1.0 1.3" stroke-linecap="butt"/>
<line x1="136.4" y1="344.6" x2="252.3" y2="409.0" stroke="#cf6a26" stroke-width="1.3" stroke-dasharray="1.0 1.3" stroke-linecap="butt"/>
<line x1="158.4" y1="328.9" x2="274.1" y2="392.5" stroke="#cf6a26" stroke-width="1.3" stroke-dasharray="1.0 1.3" stroke-linecap="butt"/>
<line x1="180.2" y1="313.3" x2="295.6" y2="376.3" stroke="#cf6a26" stroke-width="1.3" stroke-dasharray="1.0 1.3" stroke-linecap="butt"/>
<line x1="201.7" y1="297.9" x2="316.9" y2="360.2" stroke="#cf6a26" stroke-width="1.3" stroke-dasharray="1.0 1.3" stroke-linecap="butt"/>
<line x1="222.9" y1="282.7" x2="337.9" y2="344.3" stroke="#cf6a26" stroke-width="1.3" stroke-dasharray="1.0 1.3" stroke-linecap="butt"/>
<line x1="244.0" y1="267.6" x2="358.7" y2="328.6" stroke="#cf6a26" stroke-width="1.3" stroke-dasharray="1.0 1.3" stroke-linecap="butt"/>
<line x1="264.8" y1="252.7" x2="379.3" y2="313.1" stroke="#cf6a26" stroke-width="1.3" stroke-dasharray="1.0 1.3" stroke-linecap="butt"/>
<polygon points="345.8,349.8 464.8,413.6 564.9,333.4 447.2,272.9" fill="#c96a22" />
<polygon points="345.8,348.6 464.8,412.4 564.9,332.2 447.2,271.7" fill="url(#pb)" stroke="#cf6f20" stroke-width="0.6" stroke-linejoin="round" />
<polygon points="368.1,346.9 463.0,397.6 463.0,375.6 368.1,324.9" fill="url(#pl)" stroke="#854315" stroke-width="0.4" stroke-linejoin="round" />
<polygon points="463.0,397.6 543.0,333.9 543.0,311.9 463.0,375.6" fill="url(#pr)" stroke="#964e19" stroke-width="0.4" stroke-linejoin="round" />
<polygon points="368.1,324.9 463.0,375.6 543.0,311.9 448.9,263.3" fill="url(#pt)" stroke="#dc7a28" stroke-width="0.6" stroke-linejoin="round" />
<line x1="543.0" y1="311.9" x2="544.0" y2="333.6" stroke="#d4d4d4" stroke-width="1.1" />
<line x1="543.6" y1="368.4" x2="679.2" y2="259.0" stroke="#73320e" stroke-width="3.3" stroke-linecap="square"/>
<line x1="555.9" y1="374.7" x2="691.3" y2="265.0" stroke="#73320e" stroke-width="3.3" stroke-linecap="square"/>
<line x1="568.1" y1="381.2" x2="703.3" y2="270.9" stroke="#73320e" stroke-width="3.3" stroke-linecap="square"/>
<line x1="580.5" y1="387.6" x2="715.4" y2="276.9" stroke="#73320e" stroke-width="3.3" stroke-linecap="square"/>
<line x1="592.8" y1="394.1" x2="727.6" y2="282.9" stroke="#73320e" stroke-width="3.3" stroke-linecap="square"/>
<line x1="605.3" y1="400.5" x2="739.8" y2="288.9" stroke="#73320e" stroke-width="3.3" stroke-linecap="square"/>
<line x1="617.8" y1="407.1" x2="752.0" y2="294.9" stroke="#73320e" stroke-width="3.3" stroke-linecap="square"/>
<line x1="630.3" y1="413.6" x2="764.3" y2="301.0" stroke="#73320e" stroke-width="3.3" stroke-linecap="square"/>
<line x1="642.9" y1="420.2" x2="776.7" y2="307.1" stroke="#73320e" stroke-width="3.3" stroke-linecap="square"/>
<line x1="655.5" y1="426.8" x2="789.1" y2="313.2" stroke="#73320e" stroke-width="3.3" stroke-linecap="square"/>
<line x1="668.2" y1="433.4" x2="801.5" y2="319.3" stroke="#73320e" stroke-width="3.3" stroke-linecap="square"/>
<line x1="543.6" y1="368.4" x2="668.2" y2="433.4" stroke="#73320e" stroke-width="3.3" stroke-linecap="square"/>
<line x1="563.7" y1="352.2" x2="687.9" y2="416.5" stroke="#73320e" stroke-width="3.3" stroke-linecap="square"/>
<line x1="583.5" y1="336.2" x2="707.4" y2="399.9" stroke="#73320e" stroke-width="3.3" stroke-linecap="square"/>
<line x1="603.1" y1="320.4" x2="726.6" y2="383.4" stroke="#73320e" stroke-width="3.3" stroke-linecap="square"/>
<line x1="622.4" y1="304.8" x2="745.7" y2="367.1" stroke="#73320e" stroke-width="3.3" stroke-linecap="square"/>
<line x1="641.6" y1="289.4" x2="764.5" y2="351.0" stroke="#73320e" stroke-width="3.3" stroke-linecap="square"/>
<line x1="660.5" y1="274.1" x2="783.1" y2="335.1" stroke="#73320e" stroke-width="3.3" stroke-linecap="square"/>
<line x1="679.2" y1="259.0" x2="801.5" y2="319.3" stroke="#73320e" stroke-width="3.3" stroke-linecap="square"/>
<line x1="543.6" y1="368.4" x2="679.2" y2="259.0" stroke="#ad511a" stroke-width="2.3" stroke-linecap="square"/>
<line x1="555.9" y1="374.7" x2="691.3" y2="265.0" stroke="#ad511a" stroke-width="2.3" stroke-linecap="square"/>
<line x1="568.1" y1="381.2" x2="703.3" y2="270.9" stroke="#ad511a" stroke-width="2.3" stroke-linecap="square"/>
<line x1="580.5" y1="387.6" x2="715.4" y2="276.9" stroke="#ad511a" stroke-width="2.3" stroke-linecap="square"/>
<line x1="592.8" y1="394.1" x2="727.6" y2="282.9" stroke="#ad511a" stroke-width="2.3" stroke-linecap="square"/>
<line x1="605.3" y1="400.5" x2="739.8" y2="288.9" stroke="#ad511a" stroke-width="2.3" stroke-linecap="square"/>
<line x1="617.8" y1="407.1" x2="752.0" y2="294.9" stroke="#ad511a" stroke-width="2.3" stroke-linecap="square"/>
<line x1="630.3" y1="413.6" x2="764.3" y2="301.0" stroke="#ad511a" stroke-width="2.3" stroke-linecap="square"/>
<line x1="642.9" y1="420.2" x2="776.7" y2="307.1" stroke="#ad511a" stroke-width="2.3" stroke-linecap="square"/>
<line x1="655.5" y1="426.8" x2="789.1" y2="313.2" stroke="#ad511a" stroke-width="2.3" stroke-linecap="square"/>
<line x1="668.2" y1="433.4" x2="801.5" y2="319.3" stroke="#ad511a" stroke-width="2.3" stroke-linecap="square"/>
<line x1="543.6" y1="368.4" x2="668.2" y2="433.4" stroke="#ad511a" stroke-width="2.3" stroke-linecap="square"/>
<line x1="563.7" y1="352.2" x2="687.9" y2="416.5" stroke="#ad511a" stroke-width="2.3" stroke-linecap="square"/>
<line x1="583.5" y1="336.2" x2="707.4" y2="399.9" stroke="#ad511a" stroke-width="2.3" stroke-linecap="square"/>
<line x1="603.1" y1="320.4" x2="726.6" y2="383.4" stroke="#ad511a" stroke-width="2.3" stroke-linecap="square"/>
<line x1="622.4" y1="304.8" x2="745.7" y2="367.1" stroke="#ad511a" stroke-width="2.3" stroke-linecap="square"/>
<line x1="641.6" y1="289.4" x2="764.5" y2="351.0" stroke="#ad511a" stroke-width="2.3" stroke-linecap="square"/>
<line x1="660.5" y1="274.1" x2="783.1" y2="335.1" stroke="#ad511a" stroke-width="2.3" stroke-linecap="square"/>
<line x1="679.2" y1="259.0" x2="801.5" y2="319.3" stroke="#ad511a" stroke-width="2.3" stroke-linecap="square"/>
<line x1="543.6" y1="368.4" x2="679.2" y2="259.0" stroke="#cf6a26" stroke-width="1.3" stroke-dasharray="1.0 1.3" stroke-linecap="butt"/>
<line x1="555.9" y1="374.7" x2="691.3" y2="265.0" stroke="#cf6a26" stroke-width="1.3" stroke-dasharray="1.0 1.3" stroke-linecap="butt"/>
<line x1="568.1" y1="381.2" x2="703.3" y2="270.9" stroke="#cf6a26" stroke-width="1.3" stroke-dasharray="1.0 1.3" stroke-linecap="butt"/>
<line x1="580.5" y1="387.6" x2="715.4" y2="276.9" stroke="#cf6a26" stroke-width="1.3" stroke-dasharray="1.0 1.3" stroke-linecap="butt"/>
<line x1="592.8" y1="394.1" x2="727.6" y2="282.9" stroke="#cf6a26" stroke-width="1.3" stroke-dasharray="1.0 1.3" stroke-linecap="butt"/>
<line x1="605.3" y1="400.5" x2="739.8" y2="288.9" stroke="#cf6a26" stroke-width="1.3" stroke-dasharray="1.0 1.3" stroke-linecap="butt"/>
<line x1="617.8" y1="407.1" x2="752.0" y2="294.9" stroke="#cf6a26" stroke-width="1.3" stroke-dasharray="1.0 1.3" stroke-linecap="butt"/>
<line x1="630.3" y1="413.6" x2="764.3" y2="301.0" stroke="#cf6a26" stroke-width="1.3" stroke-dasharray="1.0 1.3" stroke-linecap="butt"/>
<line x1="642.9" y1="420.2" x2="776.7" y2="307.1" stroke="#cf6a26" stroke-width="1.3" stroke-dasharray="1.0 1.3" stroke-linecap="butt"/>
<line x1="655.5" y1="426.8" x2="789.1" y2="313.2" stroke="#cf6a26" stroke-width="1.3" stroke-dasharray="1.0 1.3" stroke-linecap="butt"/>
<line x1="668.2" y1="433.4" x2="801.5" y2="319.3" stroke="#cf6a26" stroke-width="1.3" stroke-dasharray="1.0 1.3" stroke-linecap="butt"/>
<line x1="543.6" y1="368.4" x2="668.2" y2="433.4" stroke="#cf6a26" stroke-width="1.3" stroke-dasharray="1.0 1.3" stroke-linecap="butt"/>
<line x1="563.7" y1="352.2" x2="687.9" y2="416.5" stroke="#cf6a26" stroke-width="1.3" stroke-dasharray="1.0 1.3" stroke-linecap="butt"/>
<line x1="583.5" y1="336.2" x2="707.4" y2="399.9" stroke="#cf6a26" stroke-width="1.3" stroke-dasharray="1.0 1.3" stroke-linecap="butt"/>
<line x1="603.1" y1="320.4" x2="726.6" y2="383.4" stroke="#cf6a26" stroke-width="1.3" stroke-dasharray="1.0 1.3" stroke-linecap="butt"/>
<line x1="622.4" y1="304.8" x2="745.7" y2="367.1" stroke="#cf6a26" stroke-width="1.3" stroke-dasharray="1.0 1.3" stroke-linecap="butt"/>
<line x1="641.6" y1="289.4" x2="764.5" y2="351.0" stroke="#cf6a26" stroke-width="1.3" stroke-dasharray="1.0 1.3" stroke-linecap="butt"/>
<line x1="660.5" y1="274.1" x2="783.1" y2="335.1" stroke="#cf6a26" stroke-width="1.3" stroke-dasharray="1.0 1.3" stroke-linecap="butt"/>
<line x1="679.2" y1="259.0" x2="801.5" y2="319.3" stroke="#cf6a26" stroke-width="1.3" stroke-dasharray="1.0 1.3" stroke-linecap="butt"/>
<polygon points="238.2,438.5 358.8,506.2 465.1,420.9 345.8,356.8" fill="#c96a22" />
<polygon points="238.2,437.3 358.8,505.0 465.1,419.7 345.8,355.6" fill="url(#pb)" stroke="#cf6f20" stroke-width="0.6" stroke-linejoin="round" />
<polygon points="261.3,435.5 357.4,489.3 357.4,467.3 261.3,413.5" fill="url(#pl)" stroke="#854315" stroke-width="0.4" stroke-linejoin="round" />
<polygon points="357.4,489.3 442.4,421.5 442.4,399.5 357.4,467.3" fill="url(#pr)" stroke="#964e19" stroke-width="0.4" stroke-linejoin="round" />
<polygon points="261.3,413.5 357.4,467.3 442.4,399.5 347.0,348.0" fill="url(#pt)" stroke="#dc7a28" stroke-width="0.6" stroke-linejoin="round" />
<line x1="442.4" y1="399.5" x2="443.4" y2="421.3" stroke="#d4d4d4" stroke-width="1.1" />
<polygon points="-25.9,462.5 90.5,531.5 205.8,444.5 90.4,379.3" fill="#c96a22" />
<polygon points="-25.9,461.3 90.5,530.3 205.8,443.3 90.4,378.1" fill="url(#pb)" stroke="#cf6f20" stroke-width="0.6" stroke-linejoin="round" />
<polygon points="-2.3,459.5 90.5,514.3 90.5,492.3 -2.3,437.5" fill="url(#pl)" stroke="#854315" stroke-width="0.4" stroke-linejoin="round" />
<polygon points="90.5,514.3 182.6,445.1 182.6,423.1 90.5,492.3" fill="url(#pr)" stroke="#964e19" stroke-width="0.4" stroke-linejoin="round" />
<polygon points="-2.3,437.5 90.5,492.3 182.6,423.1 90.4,370.7" fill="url(#pt2)" stroke="#dc7a28" stroke-width="0.6" stroke-linejoin="round" />
<line x1="182.6" y1="423.1" x2="183.6" y2="445.0" stroke="#d4d4d4" stroke-width="1.1" />
<line x1="682.6" y1="441.4" x2="815.6" y2="326.8" stroke="#73320e" stroke-width="3.3" stroke-linecap="square"/>
<line x1="695.4" y1="448.1" x2="828.2" y2="333.0" stroke="#73320e" stroke-width="3.3" stroke-linecap="square"/>
<line x1="708.2" y1="454.8" x2="840.8" y2="339.2" stroke="#73320e" stroke-width="3.3" stroke-linecap="square"/>
<line x1="721.1" y1="461.6" x2="853.4" y2="345.4" stroke="#73320e" stroke-width="3.3" stroke-linecap="square"/>
<line x1="734.1" y1="468.3" x2="866.1" y2="351.7" stroke="#73320e" stroke-width="3.3" stroke-linecap="square"/>
<line x1="747.1" y1="475.1" x2="878.9" y2="358.0" stroke="#73320e" stroke-width="3.3" stroke-linecap="square"/>
<line x1="760.1" y1="481.9" x2="891.7" y2="364.3" stroke="#73320e" stroke-width="3.3" stroke-linecap="square"/>
<line x1="773.2" y1="488.8" x2="904.5" y2="370.7" stroke="#73320e" stroke-width="3.3" stroke-linecap="square"/>
<line x1="786.4" y1="495.7" x2="917.4" y2="377.0" stroke="#73320e" stroke-width="3.3" stroke-linecap="square"/>
<line x1="799.6" y1="502.6" x2="930.4" y2="383.4" stroke="#73320e" stroke-width="3.3" stroke-linecap="square"/>
<line x1="812.9" y1="509.5" x2="943.4" y2="389.8" stroke="#73320e" stroke-width="3.3" stroke-linecap="square"/>
<line x1="682.6" y1="441.4" x2="812.9" y2="509.5" stroke="#73320e" stroke-width="3.3" stroke-linecap="square"/>
<line x1="702.2" y1="424.5" x2="832.2" y2="491.8" stroke="#73320e" stroke-width="3.3" stroke-linecap="square"/>
<line x1="721.7" y1="407.7" x2="851.3" y2="474.3" stroke="#73320e" stroke-width="3.3" stroke-linecap="square"/>
<line x1="740.9" y1="391.2" x2="870.2" y2="457.0" stroke="#73320e" stroke-width="3.3" stroke-linecap="square"/>
<line x1="759.9" y1="374.8" x2="888.8" y2="439.9" stroke="#73320e" stroke-width="3.3" stroke-linecap="square"/>
<line x1="778.7" y1="358.6" x2="907.2" y2="423.0" stroke="#73320e" stroke-width="3.3" stroke-linecap="square"/>
<line x1="797.3" y1="342.6" x2="925.4" y2="406.3" stroke="#73320e" stroke-width="3.3" stroke-linecap="square"/>
<line x1="815.6" y1="326.8" x2="943.4" y2="389.8" stroke="#73320e" stroke-width="3.3" stroke-linecap="square"/>
<line x1="682.6" y1="441.4" x2="815.6" y2="326.8" stroke="#ad511a" stroke-width="2.3" stroke-linecap="square"/>
<line x1="695.4" y1="448.1" x2="828.2" y2="333.0" stroke="#ad511a" stroke-width="2.3" stroke-linecap="square"/>
<line x1="708.2" y1="454.8" x2="840.8" y2="339.2" stroke="#ad511a" stroke-width="2.3" stroke-linecap="square"/>
<line x1="721.1" y1="461.6" x2="853.4" y2="345.4" stroke="#ad511a" stroke-width="2.3" stroke-linecap="square"/>
<line x1="734.1" y1="468.3" x2="866.1" y2="351.7" stroke="#ad511a" stroke-width="2.3" stroke-linecap="square"/>
<line x1="747.1" y1="475.1" x2="878.9" y2="358.0" stroke="#ad511a" stroke-width="2.3" stroke-linecap="square"/>
<line x1="760.1" y1="481.9" x2="891.7" y2="364.3" stroke="#ad511a" stroke-width="2.3" stroke-linecap="square"/>
<line x1="773.2" y1="488.8" x2="904.5" y2="370.7" stroke="#ad511a" stroke-width="2.3" stroke-linecap="square"/>
<line x1="786.4" y1="495.7" x2="917.4" y2="377.0" stroke="#ad511a" stroke-width="2.3" stroke-linecap="square"/>
<line x1="799.6" y1="502.6" x2="930.4" y2="383.4" stroke="#ad511a" stroke-width="2.3" stroke-linecap="square"/>
<line x1="812.9" y1="509.5" x2="943.4" y2="389.8" stroke="#ad511a" stroke-width="2.3" stroke-linecap="square"/>
<line x1="682.6" y1="441.4" x2="812.9" y2="509.5" stroke="#ad511a" stroke-width="2.3" stroke-linecap="square"/>
<line x1="702.2" y1="424.5" x2="832.2" y2="491.8" stroke="#ad511a" stroke-width="2.3" stroke-linecap="square"/>
<line x1="721.7" y1="407.7" x2="851.3" y2="474.3" stroke="#ad511a" stroke-width="2.3" stroke-linecap="square"/>
<line x1="740.9" y1="391.2" x2="870.2" y2="457.0" stroke="#ad511a" stroke-width="2.3" stroke-linecap="square"/>
<line x1="759.9" y1="374.8" x2="888.8" y2="439.9" stroke="#ad511a" stroke-width="2.3" stroke-linecap="square"/>
<line x1="778.7" y1="358.6" x2="907.2" y2="423.0" stroke="#ad511a" stroke-width="2.3" stroke-linecap="square"/>
<line x1="797.3" y1="342.6" x2="925.4" y2="406.3" stroke="#ad511a" stroke-width="2.3" stroke-linecap="square"/>
<line x1="815.6" y1="326.8" x2="943.4" y2="389.8" stroke="#ad511a" stroke-width="2.3" stroke-linecap="square"/>
<line x1="682.6" y1="441.4" x2="815.6" y2="326.8" stroke="#cf6a26" stroke-width="1.3" stroke-dasharray="1.0 1.3" stroke-linecap="butt"/>
<line x1="695.4" y1="448.1" x2="828.2" y2="333.0" stroke="#cf6a26" stroke-width="1.3" stroke-dasharray="1.0 1.3" stroke-linecap="butt"/>
<line x1="708.2" y1="454.8" x2="840.8" y2="339.2" stroke="#cf6a26" stroke-width="1.3" stroke-dasharray="1.0 1.3" stroke-linecap="butt"/>
<line x1="721.1" y1="461.6" x2="853.4" y2="345.4" stroke="#cf6a26" stroke-width="1.3" stroke-dasharray="1.0 1.3" stroke-linecap="butt"/>
<line x1="734.1" y1="468.3" x2="866.1" y2="351.7" stroke="#cf6a26" stroke-width="1.3" stroke-dasharray="1.0 1.3" stroke-linecap="butt"/>
<line x1="747.1" y1="475.1" x2="878.9" y2="358.0" stroke="#cf6a26" stroke-width="1.3" stroke-dasharray="1.0 1.3" stroke-linecap="butt"/>
<line x1="760.1" y1="481.9" x2="891.7" y2="364.3" stroke="#cf6a26" stroke-width="1.3" stroke-dasharray="1.0 1.3" stroke-linecap="butt"/>
<line x1="773.2" y1="488.8" x2="904.5" y2="370.7" stroke="#cf6a26" stroke-width="1.3" stroke-dasharray="1.0 1.3" stroke-linecap="butt"/>
<line x1="786.4" y1="495.7" x2="917.4" y2="377.0" stroke="#cf6a26" stroke-width="1.3" stroke-dasharray="1.0 1.3" stroke-linecap="butt"/>
<line x1="799.6" y1="502.6" x2="930.4" y2="383.4" stroke="#cf6a26" stroke-width="1.3" stroke-dasharray="1.0 1.3" stroke-linecap="butt"/>
<line x1="812.9" y1="509.5" x2="943.4" y2="389.8" stroke="#cf6a26" stroke-width="1.3" stroke-dasharray="1.0 1.3" stroke-linecap="butt"/>
<line x1="682.6" y1="441.4" x2="812.9" y2="509.5" stroke="#cf6a26" stroke-width="1.3" stroke-dasharray="1.0 1.3" stroke-linecap="butt"/>
<line x1="702.2" y1="424.5" x2="832.2" y2="491.8" stroke="#cf6a26" stroke-width="1.3" stroke-dasharray="1.0 1.3" stroke-linecap="butt"/>
<line x1="721.7" y1="407.7" x2="851.3" y2="474.3" stroke="#cf6a26" stroke-width="1.3" stroke-dasharray="1.0 1.3" stroke-linecap="butt"/>
<line x1="740.9" y1="391.2" x2="870.2" y2="457.0" stroke="#cf6a26" stroke-width="1.3" stroke-dasharray="1.0 1.3" stroke-linecap="butt"/>
<line x1="759.9" y1="374.8" x2="888.8" y2="439.9" stroke="#cf6a26" stroke-width="1.3" stroke-dasharray="1.0 1.3" stroke-linecap="butt"/>
<line x1="778.7" y1="358.6" x2="907.2" y2="423.0" stroke="#cf6a26" stroke-width="1.3" stroke-dasharray="1.0 1.3" stroke-linecap="butt"/>
<line x1="797.3" y1="342.6" x2="925.4" y2="406.3" stroke="#cf6a26" stroke-width="1.3" stroke-dasharray="1.0 1.3" stroke-linecap="butt"/>
<line x1="815.6" y1="326.8" x2="943.4" y2="389.8" stroke="#cf6a26" stroke-width="1.3" stroke-dasharray="1.0 1.3" stroke-linecap="butt"/>
<polygon points="403.1,494.6 529.2,564.6 632.2,476.2 507.7,410.0" fill="#c96a22" />
<polygon points="403.1,493.4 529.2,563.4 632.2,475.0 507.7,408.8" fill="url(#pb)" stroke="#cf6f20" stroke-width="0.6" stroke-linejoin="round" />
<polygon points="426.4,491.5 527.0,547.1 527.0,525.1 426.4,469.5" fill="url(#pl)" stroke="#854315" stroke-width="0.4" stroke-linejoin="round" />
<polygon points="527.0,547.1 609.3,476.8 609.3,454.8 527.0,525.1" fill="url(#pr)" stroke="#964e19" stroke-width="0.4" stroke-linejoin="round" />
<polygon points="426.4,469.5 527.0,525.1 609.3,454.8 509.8,401.7" fill="url(#pt)" stroke="#dc7a28" stroke-width="0.6" stroke-linejoin="round" />
<line x1="609.3" y1="454.8" x2="610.4" y2="476.7" stroke="#d4d4d4" stroke-width="1.1" />
<polygon points="105.9,542.3 228.0,614.7 342.0,523.1 221.1,454.7" fill="#c96a22" />
<polygon points="105.9,541.1 228.0,613.5 342.0,521.9 221.1,453.5" fill="url(#pb)" stroke="#cf6f20" stroke-width="0.6" stroke-linejoin="round" />
<polygon points="129.9,539.1 227.3,596.6 227.3,574.6 129.9,517.1" fill="url(#pl)" stroke="#854315" stroke-width="0.4" stroke-linejoin="round" />
<polygon points="227.3,596.6 318.4,523.8 318.4,501.8 227.3,574.6" fill="url(#pr)" stroke="#964e19" stroke-width="0.4" stroke-linejoin="round" />
<polygon points="129.9,517.1 227.3,574.6 318.4,501.8 221.8,446.9" fill="url(#pt3)" stroke="#dc7a28" stroke-width="0.6" stroke-linejoin="round" />
<line x1="318.4" y1="501.8" x2="319.4" y2="523.7" stroke="#d4d4d4" stroke-width="1.1" />
<polygon points="539.6,574.9 671.8,648.4 773.0,555.4 642.6,485.9" fill="#c96a22" />
<polygon points="539.6,573.7 671.8,647.2 773.0,554.2 642.6,484.7" fill="url(#pb)" stroke="#cf6f20" stroke-width="0.6" stroke-linejoin="round" />
<polygon points="563.3,571.7 668.7,630.1 668.7,608.1 563.3,549.7" fill="url(#pl)" stroke="#854315" stroke-width="0.4" stroke-linejoin="round" />
<polygon points="668.7,630.1 749.6,556.1 749.6,534.1 668.7,608.1" fill="url(#pr)" stroke="#964e19" stroke-width="0.4" stroke-linejoin="round" />
<polygon points="563.3,549.7 668.7,608.1 749.6,534.1 645.4,478.3" fill="url(#pt)" stroke="#dc7a28" stroke-width="0.6" stroke-linejoin="round" />
<line x1="749.6" y1="534.1" x2="750.8" y2="556.0" stroke="#d4d4d4" stroke-width="1.1" />
<polygon points="254.8,615.7 382.9,691.3 494.6,595.5 367.9,524.1" fill="#c96a22" />
<polygon points="254.8,614.5 382.9,690.1 494.6,594.3 367.9,522.9" fill="url(#pb)" stroke="#cf6f20" stroke-width="0.6" stroke-linejoin="round" />
<polygon points="279.2,612.4 381.3,672.5 381.3,650.5 279.2,590.4" fill="url(#pl)" stroke="#854315" stroke-width="0.4" stroke-linejoin="round" />
<polygon points="381.3,672.5 470.6,596.3 470.6,574.3 381.3,650.5" fill="url(#pr)" stroke="#964e19" stroke-width="0.4" stroke-linejoin="round" />
<polygon points="279.2,590.4 381.3,650.5 470.6,574.3 369.4,517.0" fill="url(#pt)" stroke="#dc7a28" stroke-width="0.6" stroke-linejoin="round" />
<line x1="470.6" y1="574.3" x2="471.7" y2="596.2" stroke="#d4d4d4" stroke-width="1.1" />
<polygon points="393.2,697.4 527.6,776.8 637.4,676.0 504.8,601.2" fill="#c96a22" />
<polygon points="393.2,696.2 527.6,775.6 637.4,674.8 504.8,600.0" fill="url(#pb)" stroke="#cf6f20" stroke-width="0.6" stroke-linejoin="round" />
<polygon points="418.1,694.1 525.2,757.0 525.2,735.0 418.1,672.1" fill="url(#pl)" stroke="#854315" stroke-width="0.4" stroke-linejoin="round" />
<polygon points="525.2,757.0 613.0,676.9 613.0,654.9 525.2,735.0" fill="url(#pr)" stroke="#964e19" stroke-width="0.4" stroke-linejoin="round" />
<polygon points="418.1,672.1 525.2,735.0 613.0,654.9 507.0,594.9" fill="url(#pt)" stroke="#dc7a28" stroke-width="0.6" stroke-linejoin="round" />
<line x1="613.0" y1="654.9" x2="614.2" y2="676.9" stroke="#d4d4d4" stroke-width="1.1" />
<text transform="translate(440.8,127.2) rotate(26.1) skewX(-40) scale(1,0.74)" font-family="Liberation Sans, sans-serif" font-size="21.5" font-weight="bold" fill="#f0703a" letter-spacing="0.2">Untitled</text>
<text transform="translate(537.0,795.0) rotate(27) skewX(-30) scale(1,0.86)" font-family="Liberation Sans, sans-serif" font-size="38" font-weight="bold" letter-spacing="2" fill="#f0703a" opacity=".92">01</text>
</svg>

<div id="topbar">
 <svg class="abs" style="left:8px;top:-1px" width="20" height="20" viewBox="0 0 20 20" fill="none" stroke="#fff" stroke-width="1.3" stroke-linejoin="round" stroke-linecap="round"><path d="M1.5 8.5 L9.5 2 L17.5 8.5 V17.5 H12 V12.5 a2.5 2.5 0 0 0 -5 0 V17.5 H1.5 Z"/></svg>
 <svg class="abs" style="left:64px;top:0px" width="19.5" height="18.6" viewBox="0 0 21 20" fill="none" stroke="#fff" stroke-width="1.3" stroke-linejoin="round"><path d="M10.5 1.5 L19 5.5 V14 L10.5 18.5 L2 14 V5.5 Z M2 5.5 L10.5 9.5 L19 5.5"/></svg>
 <div class="t" style="left:93px;top:1px">Prepare</div>
 <div class="abs" style="left:174px;top:0;width:136px;height:27px;background:#009688"></div>
 <svg class="abs" style="left:199px;top:0" width="20" height="19" viewBox="0 0 20 19" fill="none" stroke="#fff" stroke-width="1.3" stroke-linejoin="round" stroke-linecap="round"><path d="M10 1.5 L18 5.5 L10 9.5 L2 5.5 Z M2 9.5 L10 13.5 L18 9.5 M2 13.5 L10 17.5 L18 13.5"/></svg>
 <div class="t" style="left:229px;top:1px">Preview</div>
 <svg class="abs" style="left:341px;top:1px" width="16.8" height="15.9" viewBox="0 0 18 17" fill="none" stroke="#fff" stroke-width="1.3" stroke-linejoin="round"><rect x="1" y="1" width="16" height="15" rx="1.5"/><path d="M4 12.5 H14 M7 3.5 h4 v3.5 h-4 z M9 7 v2.5"/></svg>
 <div class="t" style="left:368.5px;top:1px">Device</div>
 <svg class="abs" style="left:476px;top:1px" width="17" height="15.4" viewBox="0 0 19 17" fill="none" stroke="#fff" stroke-width="1.3" stroke-linejoin="round"><rect x="1" y="1" width="17" height="15" rx="1.5"/><path d="M4 5 h1.5 M7.5 5 H15 M4 8.5 h1.5 M7.5 8.5 H15 M4 12 h1.5 M7.5 12 H15"/></svg>
 <div class="t" style="left:503.7px;top:1px">Project</div>
 <!-- right buttons -->
 <div class="abs" style="left:1301px;top:-5px;width:24.5px;height:25.5px;background:#009688;border-radius:13px 0 0 13px"></div>
 <svg class="abs" style="left:1306.5px;top:6px" width="13" height="7" viewBox="0 0 13 7" fill="none" stroke="#fff" stroke-width="1.3" stroke-linecap="round"><path d="M1.5 1.6 L6.5 4.8 L11.5 1.6" stroke-linejoin="round"/></svg>
 <div class="abs" style="left:1327px;top:-5px;width:109.5px;height:25.5px;background:#6b6b6b;border-radius:0 13px 13px 0"></div>
 <div class="t" style="left:1341.5px;top:1px;color:#9e9e9e">Slice plate</div>
 <div class="abs" style="left:1451.5px;top:-5px;width:24px;height:25.5px;background:#009688;border-radius:13px 0 0 13px"></div>
 <svg class="abs" style="left:1457px;top:6px" width="13" height="7" viewBox="0 0 13 7" fill="none" stroke="#fff" stroke-width="1.3" stroke-linecap="round"><path d="M1.5 1.6 L6.5 4.8 L11.5 1.6" stroke-linejoin="round"/></svg>
 <div class="abs" style="left:1477px;top:-5px;width:163px;height:25.5px;background:#009688;border-radius:0 13px 13px 0"></div>
 <div class="t" style="left:1492px;top:1px">Export G-code file</div>
</div>

<div id="left">
 <!-- coordinates inside #left are (page y - 27) -->
 <div class="abs" style="left:0;top:0;width:419px;height:19px;background:#cecece"></div>
 <!-- Printer header -->
 <div class="hdr" style="top:19px;height:30px"></div>
 <svg class="abs" style="left:7px;top:25px" width="15" height="15" viewBox="0 0 15 15" fill="none" stroke="#009688" stroke-width="1"><rect x=".5" y=".5" width="14" height="14" rx="1.3" stroke="#636b6d"/><path d="M2.4 12.1 H12.6 M3.2 3.9 H11.8"/><rect x="5.7" y="2.3" width="3.6" height="4.6" rx=".8" fill="#f7f7f7"/><path d="M6.3 7.3 H8.7 L7.5 9.4 Z" fill="#009688" stroke-width=".6"/><circle cx="7.5" cy="4.5" r=".5" fill="#009688" stroke="none"/></svg>
 <div class="t" style="left:28px;top:25px;font-size:15.9px;color:#262e30">Printer</div>
 <div class="abs" style="left:393px;top:22px;width:19px;height:24px;background:#f4f4f4"></div>
 <svg class="abs" style="left:394.5px;top:24.5px" width="16" height="16" viewBox="0 0 16 16" fill="none" stroke="#6b7375" stroke-width="1"><path d="M.5 4 H3 M6 4 H15.5 M.5 12 H10 M13 12 H15.5"/><rect x="3" y="1" width="3" height="6" rx="1.4"/><rect x="10" y="9" width="3" height="6" rx="1.4"/></svg>
 <!-- printer combo -->
 <div class="box" style="left:11px;top:65px;width:349px;height:26px"></div>
 <svg class="abs" style="left:17px;top:75px" width="11" height="6" viewBox="0 0 11 6" fill="none" stroke="#6b7375" stroke-width="1.1" stroke-linecap="round"><path d="M1 1.2 L5.5 4.4 L10 1.2" stroke-linejoin="round"/></svg>
 <div class="t" style="left:32px;top:70px;font-size:15.3px">Creality K1C 0.4 nozzle</div>
 <svg class="abs" style="left:364.5px;top:68.5px" width="17" height="17" viewBox="0 0 17 17" fill="none" stroke="#6b7375" stroke-width="1.1" stroke-linejoin="round" stroke-linecap="round"><path d="M9 2.2 H2.6 a1.6 1.6 0 0 0 -1.6 1.6 V13.4 a1.6 1.6 0 0 0 1.6 1.6 H12.4 a1.6 1.6 0 0 0 1.6 -1.6 V8.5"/><path d="M5.2 11.8 L6 8.8 L13.6 1.2 L15.8 3.4 L8.2 11 Z"/></svg>
 <svg class="abs" style="left:390px;top:68px" width="18" height="17" viewBox="0 0 18 17" fill="none" stroke="#009688" stroke-width="1.2" stroke-linecap="round"><path d="M1.5 6.2 a10.6 10.6 0 0 1 15 0 M3.6 8.7 a7.6 7.6 0 0 1 10.8 0 M5.8 11.2 a4.5 4.5 0 0 1 6.4 0"/><circle cx="9" cy="13.8" r="1.5"/></svg>
 <!-- bed type -->
 <div class="t" style="left:11.5px;top:102px;font-size:15.6px;color:#1f2628">Bed type</div>
 <div class="box" style="left:78px;top:96px;width:329px;height:29px"></div>
 <svg class="abs" style="left:84px;top:108px" width="11" height="6" viewBox="0 0 11 6" fill="none" stroke="#6b7375" stroke-width="1.1" stroke-linecap="round"><path d="M1 1.2 L5.5 4.4 L10 1.2" stroke-linejoin="round"/></svg>
 <div class="t" style="left:98.5px;top:103px;font-size:15.7px">Smooth High Temp Plate</div>
 <!-- Filament header -->
 <div class="hdr" style="top:141.5px;height:30px"></div>
 <svg class="abs" style="left:6px;top:148px" width="16" height="16" viewBox="0 0 16 16" fill="none" stroke-width="1.1"><path d="M3.2 1 Q.6 8 3.2 15" stroke="#009688"/><path d="M6.4 1 Q3.8 8 6.4 15" stroke="#009688"/><path d="M9.6 1 Q7 8 9.6 15" stroke="#6b7375"/><ellipse cx="12.6" cy="8" rx="1.9" ry="7" stroke="#6b7375"/></svg>
 <div class="t" style="left:28px;top:148px;font-size:15.4px;color:#262e30">Filament</div>
 <div class="abs" style="left:346px;top:144.5px;width:20px;height:24px;background:#f4f4f4"></div>
 <svg class="abs" style="left:348px;top:148px" width="17" height="16" viewBox="0 0 17 16" fill="none" stroke-width="1.1"><path d="M3.2 1 Q.6 8 3.2 15" stroke="#6b7375"/><path d="M5.8 1 Q3.2 8 5.8 15" stroke="#009688"/><path d="M8.6 1 Q6.6 4 6.9 8 Q7 12 8.6 15" stroke="#6b7375" stroke-dasharray="5 3 7"/><path d="M8 8 H15.5 M11.7 4.2 V11.8" stroke="#6b7375"/></svg>
 <div class="abs" style="left:393px;top:144.5px;width:19px;height:24px;background:#f4f4f4"></div>
 <svg class="abs" style="left:394.5px;top:147.5px" width="16" height="16" viewBox="0 0 16 16" fill="none" stroke="#6b7375" stroke-width="1"><path d="M.5 4 H3 M6 4 H15.5 M.5 12 H10 M13 12 H15.5"/><rect x="3" y="1" width="3" height="6" rx="1.4"/><rect x="10" y="9" width="3" height="6" rx="1.4"/></svg>
 <!-- filament row -->
 <div class="abs" style="left:11px;top:193px;width:20px;height:20px;background:#26a69a"></div>
 <div class="t" style="left:17.5px;top:197px;font-size:12.5px;color:#fff">1</div>
 <div class="box" style="left:36px;top:190px;width:350px;height:25.5px"></div>
 <svg class="abs" style="left:42px;top:200px" width="11" height="6" viewBox="0 0 11 6" fill="none" stroke="#6b7375" stroke-width="1.1" stroke-linecap="round"><path d="M1 1.2 L5.5 4.4 L10 1.2" stroke-linejoin="round"/></svg>
 <div class="t" style="left:57px;top:196px;font-size:13.35px">Fiberlogy ABS</div>
 <svg class="abs" style="left:390.5px;top:193px" width="17" height="17" viewBox="0 0 17 17" fill="none" stroke="#6b7375" stroke-width="1.1" stroke-linejoin="round" stroke-linecap="round"><path d="M9 2.2 H2.6 a1.6 1.6 0 0 0 -1.6 1.6 V13.4 a1.6 1.6 0 0 0 1.6 1.6 H12.4 a1.6 1.6 0 0 0 1.6 -1.6 V8.5"/><path d="M5.2 11.8 L6 8.8 L13.6 1.2 L15.8 3.4 L8.2 11 Z"/></svg>
 <!-- Process header -->
 <div class="hdr" style="top:234px;height:30px"></div>
 <svg class="abs" style="left:6px;top:239.5px" width="17" height="17" viewBox="0 0 17 17" fill="none" stroke-width="1.1" stroke-linejoin="round" stroke-linecap="round"><path d="M8.5 1.2 L15.8 5 L8.5 8.8 L1.2 5 Z" stroke="#6b7375"/><path d="M1.2 8.3 L8.5 12.1 L15.8 8.3" stroke="#6b7375"/><path d="M1.2 11.6 L8.5 15.4 L15.8 11.6" stroke="#009688"/></svg>
 <div class="t" style="left:28px;top:240.5px;font-size:14.6px;color:#262e30">Process</div>
 <div class="abs" style="left:95px;top:239px;width:103px;height:20px;border-radius:10px;background:#d8d8d8"></div>
 <div class="abs" style="left:144.5px;top:239px;width:53.5px;height:20px;border-radius:10px;background:#009688"></div>
 <div class="t" style="left:105px;top:243px;font-size:12.3px;color:#6b6b6b">Global</div>
 <div class="t" style="left:151px;top:243px;font-size:12.3px;color:#fff">Objects</div>
 <div class="t" style="left:266px;top:242px;font-size:12.3px;color:#262e30">Advanced</div>
 <div class="abs" style="left:328px;top:241px;width:23px;height:16px;border-radius:4.5px;background:#a8a8a8"></div>
 <div class="abs" style="left:330px;top:243px;width:10px;height:12px;border-radius:3.5px;background:#e0e0e0"></div>
 <svg class="abs" style="left:369px;top:241px" width="15" height="15" viewBox="0 0 15 15" fill="none" stroke="#1f8a80" stroke-width=".9"><rect x=".6" y=".6" width="13.8" height="13.8" rx="1.5"/><path d="M3 4 h1.6 M6.2 4 H12 M3 7.5 h1.6 M6.2 7.5 H12 M3 11 h1.6 M6.2 11 H12"/></svg>
 <svg class="abs" style="left:394px;top:240px" width="17" height="17" viewBox="0 0 17 17" fill="none" stroke-width="1.1" stroke-linecap="round" stroke-linejoin="round"><path d="M1 7 V3 a1.7 1.7 0 0 1 3.4 0 V7 M1 4.8 H4.4" stroke="#6b7375"/><path d="M10.6 3.4 H14 a1.6 1.6 0 0 1 1.6 1.6 V6.6 M12.4 1.4 L10.4 3.4 L12.4 5.4" stroke="#009688"/><path d="M6.4 13 H3.6 a1.6 1.6 0 0 1 -1.6 -1.6 V10 M4.8 11 L6.8 13 L4.8 15" stroke="#009688"/><path d="M11.4 9.6 V15.4 H13.8 a1.5 1.5 0 0 0 0 -3 H11.4 M11.4 9.6 H13.5 a1.4 1.4 0 0 1 0 2.8" stroke="#6b7375"/></svg>
 <!-- search -->
 <div class="abs" style="left:0;top:264px;width:419px;height:1.5px;background:#b4b4b4"></div>
 <svg class="abs" style="left:4.5px;top:267.5px" width="16" height="16" viewBox="0 0 16 16" fill="none" stroke="#3a3a3a" stroke-width="1.8" stroke-linecap="round"><circle cx="6.3" cy="6.3" r="4.6"/><path d="M9.8 9.8 L14 14"/></svg>
 <div class="t" style="left:25px;top:269.5px;font-size:11.75px;color:#404040">Search plate, object and part.</div>
 <svg class="abs" style="left:397px;top:267.5px" width="16" height="16" viewBox="0 0 16 16"><circle cx="8" cy="8" r="7.6" fill="#707070"/><path d="M5 5 L11 11 M11 5 L5 11" stroke="#fff" stroke-width="1.6" stroke-linecap="round"/></svg>
 <div class="abs" style="left:0;top:286.5px;width:419px;height:1.5px;background:#6e6e6e"></div>
 <!-- list -->
 <div class="abs" style="left:401px;top:288px;width:18px;height:243px;background:#efefef"></div>
 <div class="abs" style="left:409px;top:347px;width:2px;height:125px;background:#7a7a7a;border-radius:1px"></div>
 <div class="t" style="left:6px;top:293px;font-size:13.3px;color:#1d2224">Name</div>
 <div class="abs" style="left:340px;top:288px;width:1px;height:23px;background:#e8e8e8"></div>
 <div class="abs" style="left:370px;top:288px;width:1px;height:23px;background:#e8e8e8"></div>

 <div class="row" style="top:312px;background:#9e9e9e"><div class="t">el4</div><div class="cb" style="left:348px;top:3.7px"><svg width="13" height="13" viewBox="0 0 13 13" fill="none" stroke="#fff" stroke-width="1.1" stroke-linecap="round" stroke-linejoin="round"><path d="M2.8 5.6 L6.2 8.4 L10.4 5.2"/></svg></div></div>
 <div class="row" style="top:334px"><div class="t">el4</div><div class="cb" style="left:348px;top:3.7px"><svg width="13" height="13" viewBox="0 0 13 13" fill="none" stroke="#fff" stroke-width="1.1" stroke-linecap="round" stroke-linejoin="round"><path d="M2.8 5.6 L6.2 8.4 L10.4 5.2"/></svg></div></div>
 <div class="row" style="top:356px"><div class="t">podstawa</div><div class="cb" style="left:348px;top:3.7px"><svg width="13" height="13" viewBox="0 0 13 13" fill="none" stroke="#fff" stroke-width="1.1" stroke-linecap="round" stroke-linejoin="round"><path d="M2.8 5.6 L6.2 8.4 L10.4 5.2"/></svg></div></div>
 <div class="row" style="top:378px"><div class="t">podstawa</div><div class="cb" style="left:348px;top:3.7px"><svg width="13" height="13" viewBox="0 0 13 13" fill="none" stroke="#fff" stroke-width="1.1" stroke-linecap="round" stroke-linejoin="round"><path d="M2.8 5.6 L6.2 8.4 L10.4 5.2"/></svg></div></div>
 <div class="row" style="top:400px"><div class="t">podstawa</div><div class="cb" style="left:348px;top:3.7px"><svg width="13" height="13" viewBox="0 0 13 13" fill="none" stroke="#fff" stroke-width="1.1" stroke-linecap="round" stroke-linejoin="round"><path d="M2.8 5.6 L6.2 8.4 L10.4 5.2"/></svg></div></div>
 <div class="row" style="top:422px"><div class="t">podstawa</div><div class="cb" style="left:348px;top:3.7px"><svg width="13" height="13" viewBox="0 0 13 13" fill="none" stroke="#fff" stroke-width="1.1" stroke-linecap="round" stroke-linejoin="round"><path d="M2.8 5.6 L6.2 8.4 L10.4 5.2"/></svg></div></div>
 <div class="row" style="top:444px"><div class="t">podstawa</div><div class="cb" style="left:348px;top:3.7px"><svg width="13" height="13" viewBox="0 0 13 13" fill="none" stroke="#fff" stroke-width="1.1" stroke-linecap="round" stroke-linejoin="round"><path d="M2.8 5.6 L6.2 8.4 L10.4 5.2"/></svg></div></div>
 <div class="row" style="top:466px"><div class="t">podstawa</div><div class="cb" style="left:348px;top:3.7px"><svg width="13" height="13" viewBox="0 0 13 13" fill="none" stroke="#fff" stroke-width="1.1" stroke-linecap="round" stroke-linejoin="round"><path d="M2.8 5.6 L6.2 8.4 L10.4 5.2"/></svg></div></div>
 <div class="row" style="top:488px"><div class="t">podstawa</div><div class="cb" style="left:348px;top:3.7px"><svg width="13" height="13" viewBox="0 0 13 13" fill="none" stroke="#fff" stroke-width="1.1" stroke-linecap="round" stroke-linejoin="round"><path d="M2.8 5.6 L6.2 8.4 L10.4 5.2"/></svg></div></div>
 <div class="row" style="top:510px"><div class="t">podstawa (1)</div><div class="cb" style="left:348px;top:3.7px"><svg width="13" height="13" viewBox="0 0 13 13" fill="none" stroke="#fff" stroke-width="1.1" stroke-linecap="round" stroke-linejoin="round"><path d="M2.8 5.6 L6.2 8.4 L10.4 5.2"/></svg></div></div>

 <div class="abs" style="left:0;top:531px;width:419px;height:1px;background:#707070"></div>
 <!-- tabs (inside #left, y = page-27) -->
 <div class="t" style="left:15.5px;top:539px;font-size:15.4px;color:#6b6b6b">Frequent</div>
 <div class="t" style="left:90px;top:539px;font-size:15.1px;color:#262e30;font-weight:bold">Quality</div>
 <div class="abs" style="left:87px;top:558px;width:57.5px;height:2.6px;border-radius:1.3px;background:#009688"></div>
 <div class="t" style="left:153.3px;top:538.5px;font-size:16.3px;color:#6b6b6b">Strength</div>
 <div class="t" style="left:227px;top:538.5px;font-size:16.3px;color:#6b6b6b">Support</div>
 <div class="t" style="left:296.5px;top:538.5px;font-size:16.1px;color:#6b6b6b">Multimaterial</div>
 <div class="t" style="left:399px;top:539px;font-size:15.5px;color:#6b6b6b">O.</div>
 <div class="abs" style="left:0;top:561px;width:419px;height:1px;background:#d6d6d6"></div>
 <!-- Layer height -->
 <svg class="abs" style="left:4px;top:573px" width="17" height="17" viewBox="0 0 17 17" fill="none" stroke-width="1"><path d="M1.2 1 V16 M.2 1 H2.2 M.2 16 H2.2" stroke="#009688"/><g stroke="#6b7375"><rect x="4.5" y=".8" width="11.5" height="2.2" rx="1.1"/><rect x="4.5" y="4.2" width="11.5" height="2.2" rx="1.1"/><rect x="4.5" y="7.6" width="11.5" height="2.2" rx="1.1"/><rect x="4.5" y="11" width="11.5" height="2.2" rx="1.1"/><path d="M4 15.8 H16.5"/></g></svg>
 <div class="sec" style="top:574.5px;font-size:15px">Layer height</div>
 <div class="secline" style="left:122px;top:581.5px"></div>
 <div class="lab" style="top:606px;font-size:15.6px">Layer height</div>
 <div class="box" style="left:244px;top:601px;width:120px;height:25.5px"></div>
 <div class="t" style="left:252px;top:607px;font-size:14.4px;color:#262e30">0.2</div>
 <div class="t" style="left:334px;top:610px;font-size:11.7px;color:#6b6b6b">mm</div>
 <!-- Seam -->
 <svg class="abs" style="left:4px;top:639px" width="17" height="17" viewBox="0 0 17 17" fill="none" stroke-width="1"><rect x=".6" y=".6" width="15.8" height="15.8" rx="1.5" stroke="#6b7375"/><path d="M7.2 2 V15 M9.8 2 V15" stroke="#009688" stroke-dasharray="1 1"/><path d="M8.5 1.5 V15.5" stroke="#009688" stroke-width=".8"/></svg>
 <div class="sec" style="top:640.5px;font-size:14.3px">Seam</div>
 <div class="secline" style="left:70px;top:647.5px"></div>
 <div class="lab" style="top:672px;font-size:15.5px">Seam position</div>
 <div class="box" style="left:244px;top:667.5px;width:120px;height:25px"></div>
 <svg class="abs" style="left:250px;top:677px" width="10" height="6" viewBox="0 0 10 6" fill="none" stroke="#6b7375" stroke-width="1" stroke-linecap="round"><path d="M1 1.2 L5 4.2 L9 1.2" stroke-linejoin="round"/></svg>
 <div class="t" style="left:265px;top:672px;font-size:15.9px;color:#262e30">Aligned</div>
 <!-- Precision -->
 <svg class="abs" style="left:4px;top:705px" width="17" height="17" viewBox="0 0 17 17" fill="none" stroke-width="1"><path d="M.6 4 V1.8 a1.2 1.2 0 0 1 1.2 -1.2 H4 M7 .6 H10 M13 .6 H15.2 a1.2 1.2 0 0 1 1.2 1.2 V4 M16.4 7 V10 M16.4 13 V15.2 a1.2 1.2 0 0 1 -1.2 1.2 H13 M10 16.4 H7 M4 16.4 H1.8 a1.2 1.2 0 0 1 -1.2 -1.2 V13 M.6 10 V7" stroke="#6b7375"/><path d="M8.5 .6 V5 M8.5 12 V16.4" stroke="#009688"/><path d="M6 8.5 H11 M8.5 6 V11" stroke="#6b7375"/></svg>
 <div class="sec" style="top:706.5px;font-size:14.4px">Precision</div>
 <div class="secline" style="left:97px;top:713.5px"></div>
 <div class="lab" style="top:738px;font-size:15px">Precise wall</div>
 <div class="ucb" style="left:244px;top:738px"></div>
 <!-- Walls and surfaces -->
 <svg class="abs" style="left:4px;top:771px" width="17" height="17" viewBox="0 0 17 17" fill="none" stroke-width="1" stroke="#009688"><path d="M.4 1 H16.6 M.4 16 H16.6"/><rect x="1" y="2.8" width="15" height="11.4"/><path d="M3 12.6 L11 4.4 M6 12.6 L14 4.4 M9.5 12.6 L14.4 7.6 M3 9.4 L8 4.4 M3 6.4 L5 4.4"/></svg>
 <div class="sec" style="top:772.5px;font-size:14.5px">Walls and surfaces</div>
 <div class="secline" style="left:163px;top:779.5px"></div>
 <div class="lab" style="top:804px;font-size:15.9px">Only one wall on top</div>
 <div class="lab" style="top:821.5px;font-size:15.9px">surfaces</div>
 <div class="cb" style="left:244px;top:813px;width:15px;height:15px"><svg width="15" height="15" viewBox="0 0 15 15" fill="none" stroke="#fff" stroke-width="1.1" stroke-linecap="round" stroke-linejoin="round"><path d="M3.4 6.4 L7.2 9.6 L11.8 6"/></svg></div>
 <div class="lab" style="top:852px;font-size:15.8px">Only one wall on first layer</div>
 <div class="ucb" style="left:244px;top:852px"></div>
</div>
<!-- left panel borders -->
<div class="abs" style="left:419px;top:27px;width:1px;height:936px;background:#a4a4a4"></div>
<div class="abs" style="left:420px;top:27px;width:4px;height:936px;background:#cecece"></div>
<div class="abs" style="left:0;top:961.2px;width:1677px;height:1.8px;background:#3c3c3c"></div>

<!-- collapse button -->
<div class="abs" style="left:424px;top:27px;width:28px;height:28px;background:#fafafa"></div>
<svg class="abs" style="left:428px;top:30px" width="20" height="20" viewBox="0 0 20 20" fill="none" stroke="#3a4244" stroke-width="1.3" stroke-linecap="round" stroke-linejoin="round"><path d="M7.2 3.2 L2.8 7.2 L7.2 11.2 M12 9.8 L16.4 13.8 L12 17.8"/></svg>
<!-- thumbnail panel -->
<div class="abs" style="left:425px;top:60px;width:127px;height:137.5px;border-radius:5px;background:#dedede"></div>
<div class="abs" style="left:431.5px;top:67px;width:111px;height:111px;border:2px solid #009688;border-radius:4px;background:#e2e0e0"></div>
<div class="abs" style="left:437px;top:73px;width:100px;height:100px;background:#d4d4d4"></div>
<div class="t" style="left:441.5px;top:76px;font-size:14.5px;color:#666">1</div>
<svg class="abs" style="left:437px;top:73px" width="100" height="100" viewBox="0 0 100 100">
 <defs><pattern id="dth" width="2.2" height="2.2" patternUnits="userSpaceOnUse" patternTransform="rotate(30)"><rect width="2.2" height="2.2" fill="#d4d4d4"/><rect width="1.5" height="1.3" fill="#1e8f84"/></pattern></defs>
 <g fill="url(#dth)">
  <polygon points="48,17 64,26 34,47 21,38"/>
  <polygon points="13,41 1,49 16,59 27,51"/>
  <polygon points="33,54 20,63 36,74 46,66"/>
 </g>
 <g fill="#1f958a" stroke="#178076" stroke-width=".6" stroke-linejoin="round">
  <polygon points="20,35 29,41 26,43 33,47 23,55 13,44"/>
  <polygon points="33,43 45,50 36,57 25,50"/>
  <polygon points="45,51 56,57 47,65 36,58"/>
  <polygon points="70,31 81,37 71,44 60,38"/>
  <polygon points="58,39 69,45 58,52 47,46"/>
  <polygon points="85,41 95,47 86,55 75,48"/>
  <polygon points="72,50 83,56 73,63 62,57"/>
  <polygon points="60,58 71,64 61,71 50,65"/>
  <polygon points="47,67 58,73 48,82 37,75"/>
 </g>
 <g fill="#147168">
  <polygon points="23,55 33,47 33,49 23,57 13,46 13,44"/>
  <polygon points="36,57 45,50 45,52 36,59 25,52 25,50"/>
  <polygon points="47,65 56,57 56,59 47,67 36,60 36,58"/>
  <polygon points="71,44 81,37 81,39 71,46 60,40 60,38"/>
  <polygon points="58,52 69,45 69,47 58,54 47,48 47,46"/>
  <polygon points="86,55 95,47 95,49 86,57 75,50 75,48"/>
  <polygon points="73,63 83,56 83,58 73,65 62,59 62,57"/>
  <polygon points="61,71 71,64 71,66 61,73 50,67 50,65"/>
  <polygon points="48,82 58,73 58,75 48,84 37,77 37,75"/>
 </g>
</svg>
<!-- view cube -->
<svg class="abs" style="left:424px;top:836px" width="200" height="127" viewBox="0 0 200 127">
 <polygon points="58.7,7.8 108.6,34 79.5,60.2 19.2,42.3" fill="#c8c8c8"/>
 <polygon points="19.2,42.3 79.5,60.2 72.2,113.8 19.2,89.6" fill="#c4c4c4"/>
 <polygon points="79.5,60.2 108.6,34 108.6,81.9 72.2,113.8" fill="#bfbfbf"/>
 <g stroke="#d2d2d2" stroke-width=".5" stroke-dasharray="1.2 1.2" fill="none"><path d="M32 31 L92 51 M45 20 L99 43 M39 48 L69 17 M59 54 L89 24 M79.5 60.2 L108.6 34 M79.5 60.2 L72.2 113.8 M79.5 78 L108.6 50 M79.5 96 L108.6 66"/></g>
 <path d="M19.2 89.6 L62 52.5" stroke="#aed4ae" stroke-width="2.6"/><polygon points="63,52 50.5,54 57.5,63" fill="#aed4ae"/>
 <path d="M19.2 89.6 V48" stroke="#8080c8" stroke-width="3.2"/><polygon points="19.2,36.5 13,48.5 25.4,48.5" fill="#8080c8"/>
 <path d="M19.2 89.6 L68 113" stroke="#c87c7c" stroke-width="3.4"/><polygon points="75,118.5 61,118.5 68.5,108" fill="#c87c7c"/>
 <text x="14" y="30.5" font-family="Liberation Sans, sans-serif" font-size="10" fill="#7676c4">Z</text>
 <text x="79" y="127.5" font-family="Liberation Sans, sans-serif" font-size="10" fill="#c86464">X</text>
 <text x="67" y="49" font-family="Liberation Sans, sans-serif" font-size="9" fill="#9ccc9c" transform="rotate(15 67 49)">y</text>
 <text transform="translate(54,35) rotate(27) skewX(-20)" font-family="Liberation Sans, sans-serif" font-size="10.5" fill="#4a4a4a">Top</text>
 <text transform="translate(30,76) rotate(20) skewX(14)" font-family="Liberation Sans, sans-serif" font-size="10.5" fill="#4a4a4a">Front</text>
 <text transform="translate(82,85) rotate(-38) skewX(-8)" font-family="Liberation Sans, sans-serif" font-size="10" fill="#4a4a4a">Right</text>
</svg>
<!-- horizontal slider -->
<div class="abs" style="left:678px;top:934.5px;width:705px;height:14px;border-radius:7px;background:#fff"></div>
<div class="abs" style="left:681px;top:937.5px;width:696px;height:8px;border-radius:4px;background:#009688"></div>
<div class="abs" style="left:1369px;top:934.5px;width:14px;height:14px;border-radius:7px;background:#fff"></div>
<div class="abs" style="left:1368.8px;top:934.3px;width:14.4px;height:14.4px;border-radius:7.2px;background:#009688;border:1.3px solid #fff"></div>
<div class="abs" style="left:1387.5px;top:933px;width:36.5px;height:17px;background:#fff;border-radius:1px"></div>
<div class="t" style="left:1391px;top:935.5px;font-size:12.4px;color:#009688">2394</div>
<!-- vertical slider -->
<div class="abs" style="left:1650.5px;top:152.5px;width:14px;height:683px;border-radius:7px;background:#fff"></div>
<div class="abs" style="left:1654px;top:158px;width:7.5px;height:672px;background:#009688"></div>
<div class="abs" style="left:1650.3px;top:152.3px;width:14.4px;height:14.4px;border-radius:7.2px;background:#009688;border:1.3px solid #fff"></div>
<svg class="abs" style="left:1651.5px;top:153.5px" width="12" height="12" viewBox="0 0 12 12" stroke="#fff" stroke-width="1"><path d="M6 3 V9 M3 6 H9"/></svg>
<div class="abs" style="left:1650.3px;top:821px;width:14.4px;height:14.4px;border-radius:7.2px;background:#009688;border:1.3px solid #fff"></div>
<div class="abs" style="left:1606px;top:127px;width:39px;height:32px;background:#fff;border-radius:1px"></div>
<svg class="abs" style="left:1640px;top:152px" width="12" height="10" viewBox="0 0 12 10"><polygon points="0,0 5,2 10,7.5 0,7" fill="#fff"/></svg>
<div class="t" style="left:1607.5px;top:129.5px;width:39px;text-align:center;font-size:12.4px;color:#009688">50</div>
<div class="t" style="left:1606.5px;top:145px;width:39px;text-align:center;font-size:12.2px;color:#009688">10.00</div>
<div class="abs" style="left:1610px;top:829px;width:35px;height:31.5px;background:#fff;border-radius:1px"></div>
<svg class="abs" style="left:1640px;top:826px" width="12" height="10" viewBox="0 0 12 10"><polygon points="0,10 5,8 10,2.5 0,3" fill="#fff"/></svg>
<div class="t" style="left:1610px;top:831px;width:35px;text-align:center;font-size:12.4px;color:#009688">1</div>
<div class="t" style="left:1610px;top:845.5px;width:35px;text-align:center;font-size:12.4px;color:#009688">0.20</div>
<!-- layers icon bottom right -->
<svg class="abs" style="left:1646px;top:929px" width="17" height="18" viewBox="0 0 17 18"><path d="M8.5 1 L16 4.8 L8.5 8.6 L1 4.8 Z" fill="#009688"/><path d="M1.2 8.2 L8.5 12 L15.8 8.2 M1.2 11.8 L8.5 15.6 L15.8 11.8" fill="none" stroke="#009688" stroke-width="1.6" stroke-linejoin="round" stroke-linecap="round"/></svg>

<div id="legend" class="abs" style="left:1203px;top:27px;width:401px;height:457.5px;background:rgba(33,33,33,.82);color:#fff;overflow:hidden;box-shadow:inset 0 0 0 1px rgba(92,92,120,.55)">
<div class="abs" style="left:0;top:0;width:401px;height:31px;background:rgba(38,38,38,.75)"></div>
<svg class="abs" style="left:19.5px;top:10px" width="15" height="12" viewBox="0 0 15 12" fill="none" stroke="#e8e8e8" stroke-width="1.1" stroke-linecap="round" stroke-linejoin="round"><path d="M1.5 5.6 L7.5 1.2 L13.5 5.6 M1.5 10.4 L7.5 6 L13.5 10.4"/></svg>
<div class="t" style="left:53.3px;top:9.5px;font-size:12.35px;font-weight:bold;color:#fff">Color scheme</div>
<div class="abs" style="left:144.5px;top:8.5px;width:197.5px;height:20.5px;background:#212121;border:1px solid #505050;border-radius:3px"></div>
<svg class="abs" style="left:150px;top:15.5px" width="12" height="7" viewBox="0 0 12 7" fill="none" stroke="#e8e8e8" stroke-width="1.1" stroke-linecap="round"><path d="M1.2 1.6 L6 5 L10.8 1.6" stroke-linejoin="round"/></svg>
<div class="t" style="left:168.5px;top:12px;font-size:13.2px;color:#f0f0f0">Line Type</div>
<div class="t" style="left:11.3px;top:34.5px;font-size:12.85px;font-weight:bold;color:#fff">Line Type</div>
<div class="t" style="left:137.3px;top:34.5px;font-size:12.50px;font-weight:bold;color:#fff">Time</div>
<div class="t" style="left:191.4px;top:34.5px;font-size:12.70px;font-weight:bold;color:#fff">Percent</div>
<div class="t" style="left:244.0px;top:34.5px;font-size:12.90px;font-weight:bold;color:#fff">Used filament</div>
<div class="t" style="left:344.4px;top:34.5px;font-size:12.55px;font-weight:bold;color:#fff">Display</div>
<div class="abs" style="left:0;top:52px;width:401px;height:1.2px;background:#c4c4c4"></div>
<div class="abs" style="left:12.2px;top:59.0px;width:8.6px;height:8.8px;background:#ffe64d"></div>
<div class="t" style="left:29.2px;top:57.02px;font-size:13.15px;color:#ececec">Inner wall</div>
<div class="t" style="left:137.4px;top:57.75px;font-size:12.70px;color:#ececec">12m22s</div>
<div class="t" style="left:191.4px;top:57.75px;font-size:12.70px;color:#ececec">12.3%</div>
<div class="t" style="left:244.0px;top:57.75px;font-size:12.70px;color:#ececec">4.15 m</div>
<div class="t" style="left:292.2px;top:57.75px;font-size:12.70px;color:#ececec">12.37 g</div>
<div class="abs" style="left:361px;top:56.1px;width:15px;height:15px;background:#575757"><svg class="abs" style="left:0;top:0" width="15" height="15" viewBox="0 0 15 15" fill="none" stroke="#009688" stroke-width="1.7" stroke-linecap="round" stroke-linejoin="round"><path d="M3 7.8 L6.2 10.8 L12.2 4.4"/></svg></div>
<div class="abs" style="left:12.2px;top:80.0px;width:8.6px;height:8.8px;background:#ff7d38"></div>
<div class="t" style="left:29.2px;top:78.02px;font-size:13.15px;color:#ececec">Outer wall</div>
<div class="t" style="left:137.4px;top:78.75px;font-size:12.70px;color:#ececec">18m38s</div>
<div class="t" style="left:191.4px;top:78.75px;font-size:12.70px;color:#ececec">18.6%</div>
<div class="t" style="left:244.0px;top:78.75px;font-size:12.70px;color:#ececec">3.35 m</div>
<div class="t" style="left:292.2px;top:78.75px;font-size:12.70px;color:#ececec">9.98 g</div>
<div class="abs" style="left:361px;top:77.1px;width:15px;height:15px;background:#575757"><svg class="abs" style="left:0;top:0" width="15" height="15" viewBox="0 0 15 15" fill="none" stroke="#009688" stroke-width="1.7" stroke-linecap="round" stroke-linejoin="round"><path d="M3 7.8 L6.2 10.8 L12.2 4.4"/></svg></div>
<div class="abs" style="left:12.2px;top:101.0px;width:8.6px;height:8.8px;background:#b03029"></div>
<div class="t" style="left:29.2px;top:99.02px;font-size:13.15px;color:#ececec">Sparse infill</div>
<div class="t" style="left:137.4px;top:99.75px;font-size:12.70px;color:#ececec">21m49s</div>
<div class="t" style="left:191.4px;top:99.75px;font-size:12.70px;color:#ececec">21.7%</div>
<div class="t" style="left:244.0px;top:99.75px;font-size:12.70px;color:#ececec">5.53 m</div>
<div class="t" style="left:292.2px;top:99.75px;font-size:12.70px;color:#ececec">16.51 g</div>
<div class="abs" style="left:361px;top:98.1px;width:15px;height:15px;background:#575757"><svg class="abs" style="left:0;top:0" width="15" height="15" viewBox="0 0 15 15" fill="none" stroke="#009688" stroke-width="1.7" stroke-linecap="round" stroke-linejoin="round"><path d="M3 7.8 L6.2 10.8 L12.2 4.4"/></svg></div>
<div class="abs" style="left:12.2px;top:122.0px;width:8.6px;height:8.8px;background:#9654cc"></div>
<div class="t" style="left:29.2px;top:120.02px;font-size:13.15px;color:#ececec">Internal solid infill</div>
<div class="t" style="left:137.4px;top:120.75px;font-size:12.70px;color:#ececec">14m39s</div>
<div class="t" style="left:191.4px;top:120.75px;font-size:12.70px;color:#ececec">14.6%</div>
<div class="t" style="left:244.0px;top:120.75px;font-size:12.70px;color:#ececec">5.04 m</div>
<div class="t" style="left:292.2px;top:120.75px;font-size:12.70px;color:#ececec">15.05 g</div>
<div class="abs" style="left:361px;top:119.1px;width:15px;height:15px;background:#575757"><svg class="abs" style="left:0;top:0" width="15" height="15" viewBox="0 0 15 15" fill="none" stroke="#009688" stroke-width="1.7" stroke-linecap="round" stroke-linejoin="round"><path d="M3 7.8 L6.2 10.8 L12.2 4.4"/></svg></div>
<div class="abs" style="left:12.2px;top:143.0px;width:8.6px;height:8.8px;background:#f04040"></div>
<div class="t" style="left:29.2px;top:141.03px;font-size:13.15px;color:#ececec">Top surface</div>
<div class="t" style="left:137.4px;top:141.75px;font-size:12.70px;color:#ececec">7m21s</div>
<div class="t" style="left:191.4px;top:141.75px;font-size:12.70px;color:#ececec">7.3%</div>
<div class="t" style="left:244.0px;top:141.75px;font-size:12.70px;color:#ececec">1.80 m</div>
<div class="t" style="left:292.2px;top:141.75px;font-size:12.70px;color:#ececec">5.37 g</div>
<div class="abs" style="left:361px;top:140.1px;width:15px;height:15px;background:#575757"><svg class="abs" style="left:0;top:0" width="15" height="15" viewBox="0 0 15 15" fill="none" stroke="#009688" stroke-width="1.7" stroke-linecap="round" stroke-linejoin="round"><path d="M3 7.8 L6.2 10.8 L12.2 4.4"/></svg></div>
<div class="abs" style="left:12.2px;top:164.0px;width:8.6px;height:8.8px;background:#665cc7"></div>
<div class="t" style="left:29.2px;top:162.03px;font-size:13.15px;color:#ececec">Bottom surface</div>
<div class="t" style="left:137.4px;top:162.75px;font-size:12.70px;color:#ececec">11m19s</div>
<div class="t" style="left:191.4px;top:162.75px;font-size:12.70px;color:#ececec">11.3%</div>
<div class="t" style="left:244.0px;top:162.75px;font-size:12.70px;color:#ececec">1.63 m</div>
<div class="t" style="left:292.2px;top:162.75px;font-size:12.70px;color:#ececec">4.86 g</div>
<div class="abs" style="left:361px;top:161.1px;width:15px;height:15px;background:#575757"><svg class="abs" style="left:0;top:0" width="15" height="15" viewBox="0 0 15 15" fill="none" stroke="#009688" stroke-width="1.7" stroke-linecap="round" stroke-linejoin="round"><path d="M3 7.8 L6.2 10.8 L12.2 4.4"/></svg></div>
<div class="abs" style="left:12.2px;top:185.0px;width:8.6px;height:8.8px;background:#4d80ba"></div>
<div class="t" style="left:29.2px;top:183.03px;font-size:13.15px;color:#ececec">Internal Bridge</div>
<div class="t" style="left:137.4px;top:183.75px;font-size:12.70px;color:#ececec">5m52s</div>
<div class="t" style="left:191.4px;top:183.75px;font-size:12.70px;color:#ececec">5.8%</div>
<div class="t" style="left:244.0px;top:183.75px;font-size:12.70px;color:#ececec">1.27 m</div>
<div class="t" style="left:292.2px;top:183.75px;font-size:12.70px;color:#ececec">3.78 g</div>
<div class="abs" style="left:361px;top:182.1px;width:15px;height:15px;background:#575757"><svg class="abs" style="left:0;top:0" width="15" height="15" viewBox="0 0 15 15" fill="none" stroke="#009688" stroke-width="1.7" stroke-linecap="round" stroke-linejoin="round"><path d="M3 7.8 L6.2 10.8 L12.2 4.4"/></svg></div>
<div class="abs" style="left:12.2px;top:206.0px;width:8.6px;height:8.8px;background:#38489b"></div>
<div class="t" style="left:29.2px;top:204.03px;font-size:13.15px;color:#ececec">Travel</div>
<div class="t" style="left:137.4px;top:204.75px;font-size:12.70px;color:#ececec">8m23s</div>
<div class="t" style="left:191.4px;top:204.75px;font-size:12.70px;color:#ececec">8.4%</div>
<div class="abs" style="left:361px;top:203.1px;width:15px;height:15px;background:#575757"></div>
<div class="abs" style="left:12.2px;top:227.0px;width:8.6px;height:8.8px;background:#cd22d6"></div>
<div class="t" style="left:29.2px;top:225.03px;font-size:13.15px;color:#ececec">Retract</div>
<div class="abs" style="left:361px;top:224.1px;width:15px;height:15px;background:#575757"></div>
<div class="abs" style="left:12.2px;top:248.0px;width:8.6px;height:8.8px;background:#49adcf"></div>
<div class="t" style="left:29.2px;top:246.03px;font-size:13.15px;color:#ececec">Unretract</div>
<div class="abs" style="left:361px;top:245.1px;width:15px;height:15px;background:#575757"></div>
<div class="abs" style="left:12.2px;top:269.0px;width:8.6px;height:8.8px;background:#ffff00"></div>
<div class="t" style="left:29.2px;top:267.03px;font-size:13.15px;color:#ececec">Wipe</div>
<div class="abs" style="left:361px;top:266.1px;width:15px;height:15px;background:#575757"></div>
<div class="abs" style="left:12.2px;top:290.0px;width:8.6px;height:8.8px;background:#e6e6e6"></div>
<div class="t" style="left:29.2px;top:288.03px;font-size:13.15px;color:#ececec">Seams</div>
<div class="abs" style="left:361px;top:287.1px;width:15px;height:15px;background:#575757"><svg class="abs" style="left:0;top:0" width="15" height="15" viewBox="0 0 15 15" fill="none" stroke="#009688" stroke-width="1.7" stroke-linecap="round" stroke-linejoin="round"><path d="M3 7.8 L6.2 10.8 L12.2 4.4"/></svg></div>
<div class="t" style="left:11.3px;top:317.5px;font-size:13.1px;font-weight:bold;color:#fff">Total estimation</div>
<div class="abs" style="left:0;top:336.2px;width:401px;height:1.2px;background:#c4c4c4"></div>
<div class="t" style="left:11.3px;top:340.95px;font-size:13.20px;color:#ececec">Total Filament:</div>
<div class="t" style="left:135px;top:341.12px;font-size:12.85px;color:#ececec">22.77 m</div>
<div class="t" style="left:197px;top:341.12px;font-size:12.85px;color:#ececec">67.91 g</div>
<div class="t" style="left:11.3px;top:360.05px;font-size:13.00px;color:#ececec">Model Filament:</div>
<div class="t" style="left:135px;top:360.12px;font-size:12.85px;color:#ececec">22.77 m</div>
<div class="t" style="left:197px;top:360.12px;font-size:12.85px;color:#ececec">67.91 g</div>
<div class="t" style="left:11.3px;top:379.85px;font-size:12.40px;color:#ececec">Cost:</div>
<div class="t" style="left:135px;top:379.12px;font-size:12.85px;color:#ececec">1.36</div>
<div class="t" style="left:11.3px;top:398.07px;font-size:12.95px;color:#ececec">Prepare time:</div>
<div class="t" style="left:135px;top:398.12px;font-size:12.85px;color:#ececec">1s</div>
<div class="t" style="left:11.3px;top:416.84px;font-size:13.43px;color:#ececec">Model printing time:</div>
<div class="t" style="left:135px;top:417.12px;font-size:12.85px;color:#ececec">1h40m</div>
<div class="t" style="left:11.3px;top:435.90px;font-size:13.30px;color:#ececec">Total time:</div>
<div class="t" style="left:135px;top:436.12px;font-size:12.85px;color:#ececec">1h40m</div>
</div>
<div id="gcode" class="abs" style="left:1153px;top:487px;width:451px;height:396.5px;background:rgba(33,33,33,.83);overflow:hidden;box-shadow:inset 0 0 0 1px rgba(92,92,120,.55)">
<div class="t" style="left:8.2px;top:11.63px;font-size:12.75px;color:#e8874a">191841</div>
<div class="t" style="left:59.7px;top:12.20px;font-size:12.60px;color:#d8d22c">G1</div>
<div class="t" style="left:80.6px;top:12.18px;font-size:12.65px;color:#ececec">X121.786 Y80.4 E.08027</div>
<div class="t" style="left:8.2px;top:30.63px;font-size:12.75px;color:#e8874a">191842</div>
<div class="t" style="left:59.7px;top:31.58px;font-size:11.85px;color:#d8d22c">SET_VELOCITY_LIMIT</div>
<div class="t" style="left:189.5px;top:31.43px;font-size:12.15px;color:#ececec">ACCEL=12000 ACCEL_TO_DECEL=6000 S...</div>
<div class="t" style="left:8.2px;top:49.63px;font-size:12.75px;color:#e8874a">191843</div>
<div class="t" style="left:59.7px;top:50.20px;font-size:12.60px;color:#d8d22c">G1</div>
<div class="t" style="left:80.6px;top:50.18px;font-size:12.65px;color:#ececec">X121.25 Y80.4 F30000</div>
<div class="t" style="left:8.2px;top:68.63px;font-size:12.75px;color:#e8874a">191844</div>
<div class="t" style="left:59.7px;top:69.58px;font-size:11.85px;color:#d8d22c">SET_VELOCITY_LIMIT</div>
<div class="t" style="left:189.5px;top:69.43px;font-size:12.15px;color:#ececec">ACCEL=5000 ACCEL_TO_DECEL=2500 SQ...</div>
<div class="t" style="left:8.2px;top:87.63px;font-size:12.75px;color:#e8874a">191845</div>
<div class="t" style="left:59.7px;top:88.20px;font-size:12.60px;color:#d8d22c">G1</div>
<div class="t" style="left:80.6px;top:88.18px;font-size:12.65px;color:#ececec">F12000</div>
<div class="t" style="left:8.2px;top:106.63px;font-size:12.75px;color:#e8874a">191846</div>
<div class="t" style="left:59.7px;top:107.20px;font-size:12.60px;color:#d8d22c">G1</div>
<div class="t" style="left:80.6px;top:107.18px;font-size:12.65px;color:#ececec">X119.948 Y81.702 E.05687</div>
<div class="t" style="left:8.2px;top:125.63px;font-size:12.75px;color:#e8874a">191847</div>
<div class="t" style="left:59.7px;top:126.58px;font-size:11.85px;color:#d8d22c">SET_VELOCITY_LIMIT</div>
<div class="t" style="left:189.5px;top:126.43px;font-size:12.15px;color:#ececec">ACCEL=12000 ACCEL_TO_DECEL=6000 S...</div>
<div class="t" style="left:8.2px;top:144.63px;font-size:12.75px;color:#e8874a">191848</div>
<div class="t" style="left:59.7px;top:145.20px;font-size:12.60px;color:#d8d22c">G1</div>
<div class="t" style="left:80.6px;top:145.18px;font-size:12.65px;color:#ececec">X119.948 Y81.166 F30000</div>
<div class="t" style="left:8.2px;top:163.63px;font-size:12.75px;color:#e8874a">191849</div>
<div class="t" style="left:59.7px;top:164.58px;font-size:11.85px;color:#d8d22c">SET_VELOCITY_LIMIT</div>
<div class="t" style="left:189.5px;top:164.43px;font-size:12.15px;color:#ececec">ACCEL=5000 ACCEL_TO_DECEL=2500 SQ...</div>
<div class="t" style="left:8.2px;top:182.63px;font-size:12.75px;color:#e8874a">191850</div>
<div class="t" style="left:59.7px;top:183.20px;font-size:12.60px;color:#d8d22c">G1</div>
<div class="t" style="left:80.6px;top:183.18px;font-size:12.65px;color:#ececec">F12000</div>
<div class="abs" style="left:3.5px;top:197.9px;width:443px;height:18.5px;border:1px solid #d8763a"></div>
<div class="t" style="left:8.2px;top:201.63px;font-size:12.75px;color:#e8874a">191851</div>
<div class="t" style="left:59.7px;top:202.20px;font-size:12.60px;color:#d8d22c">G1</div>
<div class="t" style="left:80.6px;top:202.18px;font-size:12.65px;color:#ececec">X120.714 Y80.4 E.03346</div>
<div class="t" style="left:8.2px;top:220.63px;font-size:12.75px;color:#e8874a">191852</div>
<div class="t" style="left:59.7px;top:221.20px;font-size:12.60px;color:#d8d22c">G1</div>
<div class="t" style="left:80.6px;top:221.18px;font-size:12.65px;color:#ececec">E-.38327 F2400</div>
<div class="t" style="left:8.2px;top:239.63px;font-size:12.75px;color:#e8874a">191853</div>
<div class="t" style="left:59.7px;top:240.58px;font-size:11.85px;color:#a6a6a6">;WIPE_START</div>
<div class="t" style="left:8.2px;top:258.62px;font-size:12.75px;color:#e8874a">191854</div>
<div class="t" style="left:59.7px;top:259.20px;font-size:12.60px;color:#d8d22c">G1</div>
<div class="t" style="left:80.6px;top:259.18px;font-size:12.65px;color:#ececec">F12000</div>
<div class="t" style="left:8.2px;top:277.62px;font-size:12.75px;color:#e8874a">191855</div>
<div class="t" style="left:59.7px;top:278.20px;font-size:12.60px;color:#d8d22c">G1</div>
<div class="t" style="left:80.6px;top:278.18px;font-size:12.65px;color:#ececec">X119.948 Y81.166 E-.21673</div>
<div class="t" style="left:8.2px;top:296.62px;font-size:12.75px;color:#e8874a">191856</div>
<div class="t" style="left:59.7px;top:297.57px;font-size:11.85px;color:#a6a6a6">;WIPE_END</div>
<div class="t" style="left:8.2px;top:315.62px;font-size:12.75px;color:#e8874a">191857</div>
<div class="t" style="left:59.7px;top:316.57px;font-size:11.85px;color:#d8d22c">EXCLUDE_OBJECT_END</div>
<div class="t" style="left:206.0px;top:316.18px;font-size:12.65px;color:#ececec">NAME=podstawa_id_8_copy_0</div>
<div class="t" style="left:8.2px;top:334.62px;font-size:12.75px;color:#e8874a">191858</div>
<div class="t" style="left:59.7px;top:335.20px;font-size:12.60px;color:#d8d22c">M106</div>
<div class="t" style="left:96.5px;top:335.18px;font-size:12.65px;color:#ececec">S0</div>
<div class="t" style="left:8.2px;top:353.62px;font-size:12.75px;color:#e8874a">191859</div>
<div class="t" style="left:59.7px;top:354.20px;font-size:12.60px;color:#d8d22c">M106</div>
<div class="t" style="left:96.5px;top:354.18px;font-size:12.65px;color:#ececec">P2 S0</div>
<div class="t" style="left:8.2px;top:372.62px;font-size:12.75px;color:#e8874a">191860</div>
<div class="t" style="left:59.7px;top:373.35px;font-size:12.30px;color:#a6a6a6">;TYPE:Custom</div>
</div>

</body></html>
